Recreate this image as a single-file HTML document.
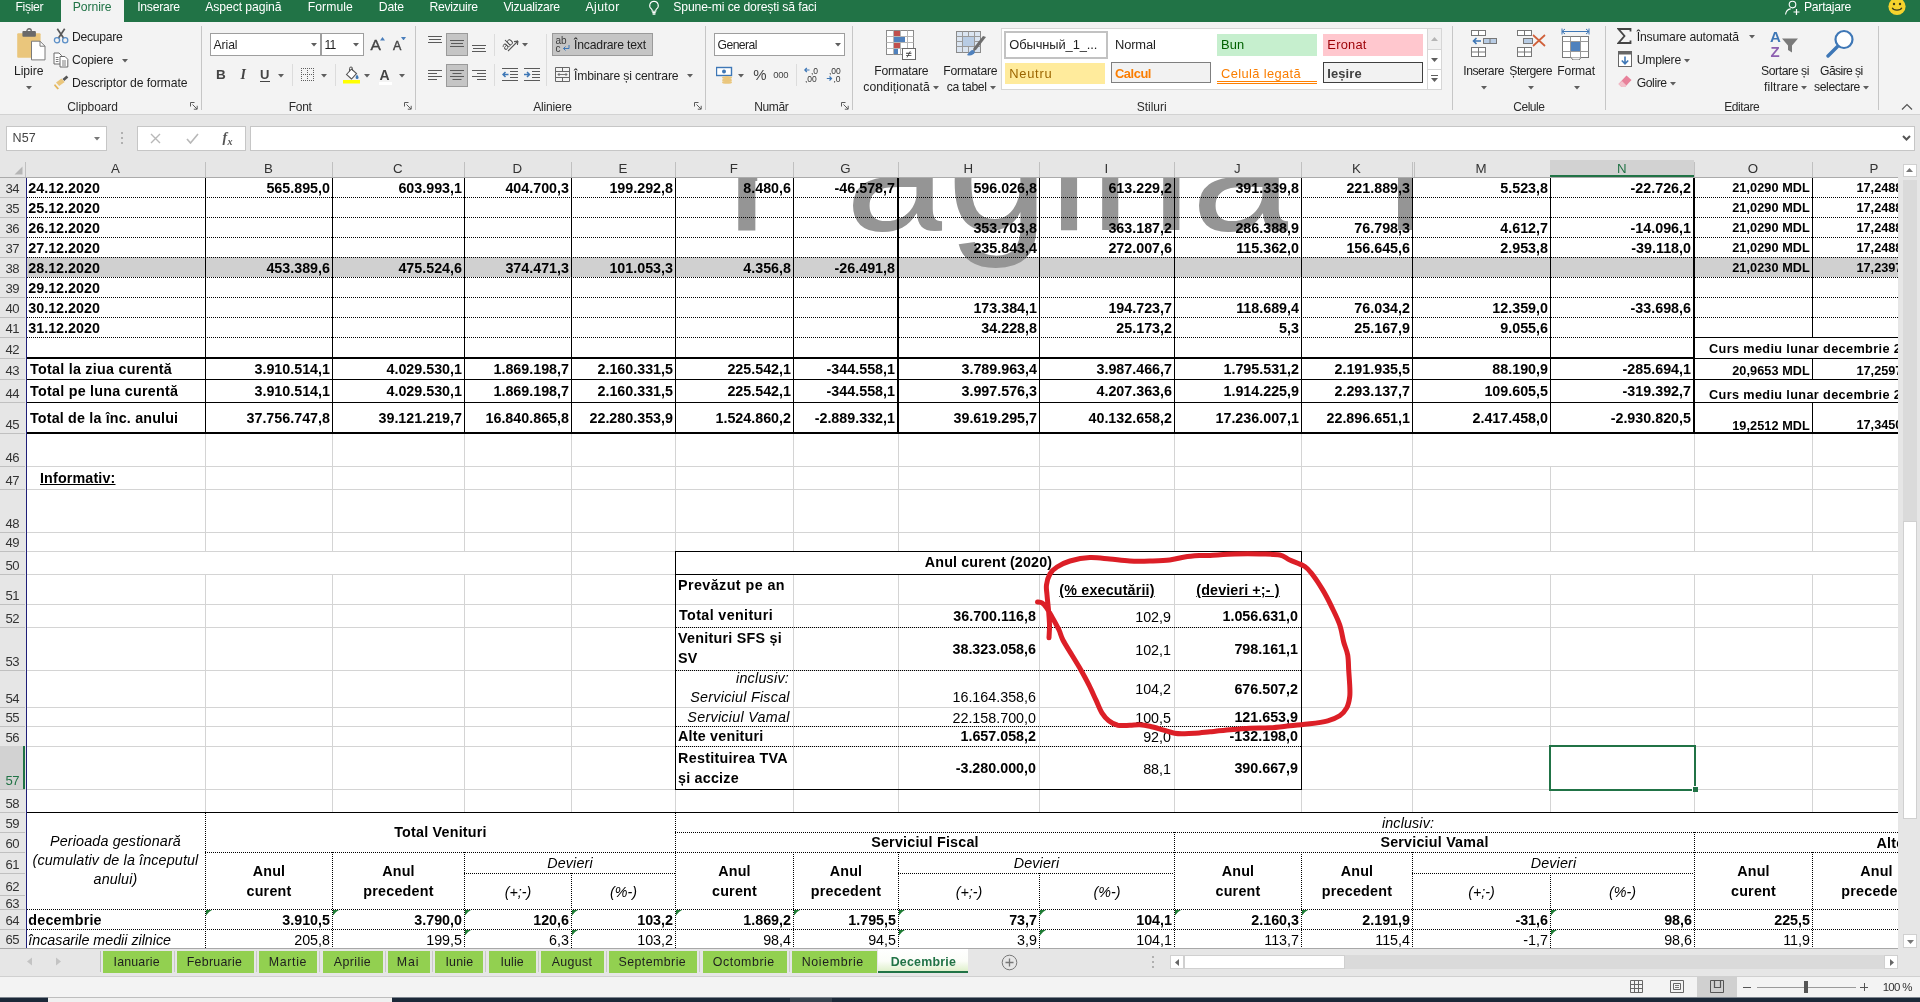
<!DOCTYPE html>
<html><head><meta charset="utf-8"><title>Excel</title>
<style>
html,body{margin:0;padding:0;}
body{width:1920px;height:1002px;overflow:hidden;position:relative;background:#e6e6e6;font-family:"Liberation Sans",sans-serif;}
div,svg{position:absolute;box-sizing:border-box;}
#root{left:0;top:0;width:1920px;height:1002px;overflow:hidden;will-change:transform;}
</style></head><body><div id="root">
<div style="left:0px;top:0px;width:1920px;height:22px;background:#217346;"></div>
<div style="left:61px;top:0px;width:63px;height:23px;background:#f3f3f3;"></div>
<div style="left:15.50px;top:-0.53px;line-height:16px;font-size:12.2px;color:#ffffff;white-space:pre;letter-spacing:-0.354px;">Fișier</div>
<div style="left:72.80px;top:-0.53px;line-height:16px;font-size:12.2px;color:#217346;white-space:pre;letter-spacing:-0.090px;">Pornire</div>
<div style="left:137.20px;top:-0.53px;line-height:16px;font-size:12.2px;color:#ffffff;white-space:pre;letter-spacing:-0.269px;">Inserare</div>
<div style="left:205.20px;top:-0.53px;line-height:16px;font-size:12.2px;color:#ffffff;white-space:pre;letter-spacing:-0.079px;">Aspect pagină</div>
<div style="left:307.80px;top:-0.53px;line-height:16px;font-size:12.2px;color:#ffffff;white-space:pre;letter-spacing:0.037px;">Formule</div>
<div style="left:378.80px;top:-0.53px;line-height:16px;font-size:12.2px;color:#ffffff;white-space:pre;letter-spacing:-0.193px;">Date</div>
<div style="left:429.50px;top:-0.53px;line-height:16px;font-size:12.2px;color:#ffffff;white-space:pre;letter-spacing:-0.283px;">Revizuire</div>
<div style="left:503.50px;top:-0.53px;line-height:16px;font-size:12.2px;color:#ffffff;white-space:pre;letter-spacing:-0.287px;">Vizualizare</div>
<div style="left:585.50px;top:-0.53px;line-height:16px;font-size:12.2px;color:#ffffff;white-space:pre;letter-spacing:0.405px;">Ajutor</div>
<div style="left:673.30px;top:-0.53px;line-height:16px;font-size:12.2px;color:#ffffff;white-space:pre;letter-spacing:-0.135px;">Spune-mi ce dorești să faci</div>
<div style="left:1804.00px;top:-0.53px;line-height:16px;font-size:12.2px;color:#ffffff;white-space:pre;letter-spacing:-0.278px;">Partajare</div>
<svg style="left:646px;top:0px;" width="16" height="16" viewBox="0 0 16 16"><path d="M8 1.2a4.3 4.3 0 0 0-2.6 7.7c.5.5.8 1 .8 1.7v.6h3.6v-.6c0-.7.3-1.2.8-1.7A4.3 4.3 0 0 0 8 1.2z" fill="none" stroke="#fff" stroke-width="1.1"/><path d="M6.3 12.6h3.4M6.6 14.1h2.8" stroke="#fff" stroke-width="1.1"/></svg>
<svg style="left:1784px;top:0px;" width="18" height="16" viewBox="0 0 18 16"><circle cx="8.5" cy="4.6" r="3.3" fill="none" stroke="#fff" stroke-width="1.1"/><path d="M1.5 14.5c.6-3.6 3-5.3 5.2-5.6" fill="none" stroke="#fff" stroke-width="1.1"/><path d="M12.5 9v6M9.5 12h6" stroke="#fff" stroke-width="1.2"/></svg>
<svg style="left:1887px;top:-3px;" width="20" height="20" viewBox="0 0 20 20"><circle cx="10" cy="9.5" r="8.6" fill="#f6d32d"/><circle cx="7" cy="7" r="1.2" fill="#3a3a1a"/><circle cx="13" cy="7" r="1.2" fill="#3a3a1a"/><path d="M5.2 10.8c1.2 3 8.4 3 9.6 0" fill="none" stroke="#3a3a1a" stroke-width="1.2"/></svg>
<div style="left:0px;top:22px;width:1920px;height:92px;background:#f3f3f3;"></div>
<div style="left:0px;top:114px;width:1920px;height:1px;background:#d2d2d2;"></div>
<div style="left:201px;top:26px;width:1px;height:84px;background:#c6c6c6;"></div>
<div style="left:415px;top:26px;width:1px;height:84px;background:#c6c6c6;"></div>
<div style="left:705px;top:26px;width:1px;height:84px;background:#c6c6c6;"></div>
<div style="left:852px;top:26px;width:1px;height:84px;background:#c6c6c6;"></div>
<div style="left:1452px;top:26px;width:1px;height:84px;background:#c6c6c6;"></div>
<div style="left:1605px;top:26px;width:1px;height:84px;background:#c6c6c6;"></div>
<div style="left:1878px;top:26px;width:1px;height:84px;background:#c6c6c6;"></div>
<svg style="left:16px;top:28px;" width="32" height="34" viewBox="0 0 32 34"><rect x="1.2" y="5.200" width="23.400" height="24.500" rx="1" fill="#eac67c"/>
<rect x="6.400" y="3" width="13.500" height="5.700" rx="1" fill="#6a6a6a"/><circle cx="13.100" cy="3" r="2.200" fill="none" stroke="#6a6a6a" stroke-width="1.400"/>
<path d="M15.500 13.200h8.500l5 5v13.700h-13.500z" fill="#fff" stroke="#7a7a7a" stroke-width="1"/><path d="M24 13.200v5h5" fill="none" stroke="#7a7a7a" stroke-width="1"/></svg>
<div style="left:14.00px;top:62.77px;line-height:16px;font-size:12.2px;color:#1f1f1f;white-space:pre;letter-spacing:-0.057px;">Lipire</div>
<svg style="left:25.5px;top:85.5px;" width="6" height="4" viewBox="0 0 6 4"><path d="M0 0h6l-3.0 3.5z" fill="#5e5e5e"/></svg>
<svg style="left:53px;top:28px;" width="16" height="16" viewBox="0 0 16 16"><path d="M4.300 .8l6.400 9.400M11.700 .8L5.300 10.200" stroke="#595959" stroke-width="1.700" fill="none"/>
<circle cx="4" cy="12.200" r="2.600" fill="none" stroke="#5b8fc7" stroke-width="1.300"/><circle cx="12.200" cy="12.200" r="2.600" fill="none" stroke="#5b8fc7" stroke-width="1.300"/></svg>
<div style="left:72.00px;top:28.77px;line-height:16px;font-size:12.2px;color:#1f1f1f;white-space:pre;letter-spacing:-0.300px;">Decupare</div>
<svg style="left:52.5px;top:51.5px;" width="17" height="16" viewBox="0 0 17 16"><path d="M1 1h5l2.500 2.500v8.500h-7.500z" fill="#fff" stroke="#6a6a6a" stroke-width="1"/><path d="M2.800 5.500h2.700M2.800 7.500h2.700M2.800 9.500h2.700" stroke="#7c7c7c" stroke-width="1"/>
<path d="M7 4.500h5l2.800 2.800v7.700h-7.800z" fill="#fff" stroke="#6a6a6a" stroke-width="1"/><path d="M9 9h4M9 11h4M9 13h4" stroke="#7c7c7c" stroke-width="1"/></svg>
<div style="left:72.00px;top:52.07px;line-height:16px;font-size:12.2px;color:#1f1f1f;white-space:pre;letter-spacing:-0.175px;">Copiere</div>
<svg style="left:122.0px;top:59.0px;" width="6" height="4" viewBox="0 0 6 4"><path d="M0 0h6l-3.0 3.5z" fill="#5e5e5e"/></svg>
<svg style="left:53px;top:74px;" width="16" height="16" viewBox="0 0 16 16"><path d="M9.5 5l4-3.5 1.8 2-4 3.5z" fill="#555"/><path d="M3 8.5l5.5-4 3.2 3.6-5.5 4z" fill="#eac67c"/><path d="M2 10l4 4.5-1.5 1L1 11.500z" fill="#e3b65a"/></svg>
<div style="left:72.00px;top:74.77px;line-height:16px;font-size:12.2px;color:#1f1f1f;white-space:pre;letter-spacing:-0.086px;">Descriptor de formate</div>
<div style="left:67.30px;top:98.84px;line-height:16px;font-size:12px;color:#2b2b2b;white-space:pre;letter-spacing:-0.096px;">Clipboard</div>
<svg style="left:190.2px;top:102.2px;" width="8" height="8" viewBox="0 0 8 8"><path d="M0.5 4.500V0.500H4.500" fill="none" stroke="#5a5a5a" stroke-width="1"/><path d="M2.500 2.500L7 7M7.200 3.800V7.200H3.800" fill="none" stroke="#5a5a5a" stroke-width="1"/></svg>
<div style="left:210px;top:33px;width:111px;height:23px;background:#fff;border:1px solid #9e9e9e;"></div>
<div style="left:213.50px;top:36.67px;line-height:16px;font-size:12.2px;color:#1f1f1f;white-space:pre;letter-spacing:-0.081px;">Arial</div>
<svg style="left:310.5px;top:43.0px;" width="6" height="4" viewBox="0 0 6 4"><path d="M0 0h6l-3.0 3.5z" fill="#5e5e5e"/></svg>
<div style="left:321px;top:33px;width:43px;height:23px;background:#fff;border:1px solid #9e9e9e;"></div>
<div style="left:324.50px;top:36.67px;line-height:16px;font-size:12.2px;color:#1f1f1f;white-space:pre;letter-spacing:-0.832px;">11</div>
<svg style="left:353.0px;top:43.0px;" width="6" height="4" viewBox="0 0 6 4"><path d="M0 0h6l-3.0 3.5z" fill="#5e5e5e"/></svg>
<div style="left:370.50px;top:34.63px;line-height:20px;font-size:15.5px;color:#444;white-space:pre;-webkit-text-stroke:0.4px #444;">A</div>
<svg style="left:379.5px;top:37px;" width="5" height="3.5" viewBox="0 0 5 3.5"><path d="M0 3.500l2.500-3.500 2.500 3.500z" fill="#4a7ebb"/></svg>
<div style="left:393.00px;top:37.67px;line-height:16px;font-size:12.5px;color:#444;white-space:pre;-webkit-text-stroke:0.4px #444;">A</div>
<svg style="left:400.5px;top:36.5px;" width="5" height="3.5" viewBox="0 0 5 3.5"><path d="M0 0h5l-2.500 3.500z" fill="#4a7ebb"/></svg>
<div style="left:216.00px;top:66.32px;line-height:18px;font-size:13.5px;color:#444;white-space:pre;font-weight:bold;">B</div>
<div style="left:240.50px;top:66.15px;line-height:18px;font-size:14px;color:#444;white-space:pre;font-weight:bold;font-style:italic;font-family:'Liberation Serif',serif;">I</div>
<div style="left:260.00px;top:65.80px;line-height:17px;font-size:13px;color:#444;white-space:pre;font-weight:bold;">U</div>
<div style="left:260px;top:80.5px;width:10px;height:1px;background:#444;"></div>
<svg style="left:278.0px;top:74.0px;" width="6" height="4" viewBox="0 0 6 4"><path d="M0 0h6l-3.0 3.5z" fill="#5e5e5e"/></svg>
<div style="left:292px;top:64px;width:1px;height:22px;background:#dcdcdc;"></div>
<svg style="left:301px;top:68px;" width="13" height="13" viewBox="0 0 13 13"><path d="M0 .5h13M0 6.500h13M0 12.500h13M.5 0v13M6.500 0v13M12.500 0v13" fill="none" stroke="#5e5e5e" stroke-width="1" stroke-dasharray="1 1" shape-rendering="crispEdges"/></svg>
<svg style="left:321.0px;top:74.0px;" width="6" height="4" viewBox="0 0 6 4"><path d="M0 0h6l-3.0 3.5z" fill="#5e5e5e"/></svg>
<div style="left:335px;top:64px;width:1px;height:22px;background:#dcdcdc;"></div>
<svg style="left:343px;top:66px;" width="18" height="18" viewBox="0 0 18 18"><path d="M3.500 8.500l5-5.500 5 4.500-5 5.500z" fill="#fff" stroke="#555" stroke-width="1.1"/><path d="M6.500 5.500V2.500a1.500 1.500 0 0 1 3 0v2" fill="none" stroke="#555" stroke-width="1"/>
<path d="M14 8.500c1 1.500 1.600 2.300 1.600 3a1.500 1.500 0 0 1-3 0c0-.7.500-1.600 1.400-3z" fill="#3e77b6"/><rect x="0" y="14" width="17" height="3.500" fill="#ffff00"/></svg>
<svg style="left:364.0px;top:74.0px;" width="6" height="4" viewBox="0 0 6 4"><path d="M0 0h6l-3.0 3.5z" fill="#5e5e5e"/></svg>
<div style="left:379.50px;top:65.65px;line-height:18px;font-size:14px;color:#444;white-space:pre;font-weight:bold;">A</div>
<div style="left:378.5px;top:81.5px;width:13px;height:3.5px;background:#fff;"></div>
<svg style="left:398.5px;top:74.0px;" width="6" height="4" viewBox="0 0 6 4"><path d="M0 0h6l-3.0 3.5z" fill="#5e5e5e"/></svg>
<div style="left:288.70px;top:98.84px;line-height:16px;font-size:12px;color:#2b2b2b;white-space:pre;letter-spacing:-0.253px;">Font</div>
<svg style="left:404.2px;top:102.2px;" width="8" height="8" viewBox="0 0 8 8"><path d="M0.5 4.500V0.500H4.500" fill="none" stroke="#5a5a5a" stroke-width="1"/><path d="M2.500 2.500L7 7M7.200 3.800V7.200H3.800" fill="none" stroke="#5a5a5a" stroke-width="1"/></svg>
<svg style="left:428px;top:36px;" width="14" height="9" viewBox="0 0 14 9"><rect x="0.0" y="0" width="14" height="1" fill="#5a5a5a"/><rect x="1.0" y="3" width="12" height="1" fill="#5a5a5a"/><rect x="0.0" y="6" width="14" height="1" fill="#5a5a5a"/></svg>
<div style="left:446px;top:33px;width:22px;height:23px;background:#c5c5c5;border:1px solid #9a9a9a;"></div>
<svg style="left:450px;top:40px;" width="14" height="9" viewBox="0 0 14 9"><rect x="0.0" y="0" width="14" height="1" fill="#5a5a5a"/><rect x="1.0" y="3" width="12" height="1" fill="#5a5a5a"/><rect x="0.0" y="6" width="14" height="1" fill="#5a5a5a"/></svg>
<svg style="left:472px;top:45px;" width="14" height="9" viewBox="0 0 14 9"><rect x="0.0" y="0" width="14" height="1" fill="#5a5a5a"/><rect x="1.0" y="3" width="12" height="1" fill="#5a5a5a"/><rect x="0.0" y="6" width="14" height="1" fill="#5a5a5a"/></svg>
<div style="left:494px;top:34px;width:1px;height:22px;background:#dcdcdc;"></div>
<svg style="left:501px;top:33px;" width="20" height="20" viewBox="0 0 20 20"><text x="0" y="13" font-size="11" font-family="Liberation Sans" fill="#444" transform="rotate(-45 8 10)">ab</text><path d="M7 18L17 8M17 8l-4 .6M17 8l-.6 4" stroke="#555" stroke-width="1.1" fill="none"/></svg>
<svg style="left:521.5px;top:42.5px;" width="6" height="4" viewBox="0 0 6 4"><path d="M0 0h6l-3.0 3.5z" fill="#5e5e5e"/></svg>
<svg style="left:428px;top:70px;" width="14" height="12" viewBox="0 0 14 12"><rect x="0" y="0" width="14" height="1" fill="#5a5a5a"/><rect x="0" y="3" width="9" height="1" fill="#5a5a5a"/><rect x="0" y="6" width="14" height="1" fill="#5a5a5a"/><rect x="0" y="9" width="9" height="1" fill="#5a5a5a"/></svg>
<div style="left:446px;top:64px;width:22px;height:23px;background:#c5c5c5;border:1px solid #9a9a9a;"></div>
<svg style="left:450px;top:70px;" width="14" height="12" viewBox="0 0 14 12"><rect x="0.0" y="0" width="14" height="1" fill="#5a5a5a"/><rect x="2.5" y="3" width="9" height="1" fill="#5a5a5a"/><rect x="0.0" y="6" width="14" height="1" fill="#5a5a5a"/><rect x="2.5" y="9" width="9" height="1" fill="#5a5a5a"/></svg>
<svg style="left:472px;top:70px;" width="14" height="12" viewBox="0 0 14 12"><rect x="0" y="0" width="14" height="1" fill="#5a5a5a"/><rect x="5" y="3" width="9" height="1" fill="#5a5a5a"/><rect x="0" y="6" width="14" height="1" fill="#5a5a5a"/><rect x="5" y="9" width="9" height="1" fill="#5a5a5a"/></svg>
<div style="left:494px;top:64px;width:1px;height:22px;background:#dcdcdc;"></div>
<svg style="left:502px;top:68px;" width="16" height="13" viewBox="0 0 16 13"><rect x="0" y="0" width="16" height="1" fill="#5a5a5a"/><rect x="8" y="3" width="8" height="1" fill="#5a5a5a"/><rect x="8" y="6" width="8" height="1" fill="#5a5a5a"/><rect x="8" y="9" width="8" height="1" fill="#5a5a5a"/><rect x="0" y="12" width="16" height="1" fill="#5a5a5a"/><path d="M6.500 6.500H1M3.500 4L1 6.500 3.500 9" stroke="#3e77b6" stroke-width="1.500" fill="none"/></svg>
<svg style="left:524px;top:68px;" width="16" height="13" viewBox="0 0 16 13"><rect x="0" y="0" width="16" height="1" fill="#5a5a5a"/><rect x="8" y="3" width="8" height="1" fill="#5a5a5a"/><rect x="8" y="6" width="8" height="1" fill="#5a5a5a"/><rect x="8" y="9" width="8" height="1" fill="#5a5a5a"/><rect x="0" y="12" width="16" height="1" fill="#5a5a5a"/><path d="M0 6.500h5.500M3 4l2.500 2.500L3 9" stroke="#3e77b6" stroke-width="1.500" fill="none"/></svg>
<div style="left:546px;top:34px;width:1px;height:52px;background:#dcdcdc;"></div>
<div style="left:552px;top:33px;width:101px;height:23px;background:#c5c5c5;border:1px solid #9a9a9a;"></div>
<div style="left:555.50px;top:33.53px;line-height:13px;font-size:10px;color:#3b3b3b;white-space:pre;">ab</div>
<div style="left:555.50px;top:41.53px;line-height:13px;font-size:10px;color:#3b3b3b;white-space:pre;">c</div>
<svg style="left:562px;top:45px;" width="8" height="7" viewBox="0 0 8 7"><path d="M7 0v3.500H1.500M3.500 1.500l-2 2 2 2" fill="none" stroke="#3e77b6" stroke-width="1"/></svg>
<div style="left:574.00px;top:37.17px;line-height:16px;font-size:12.2px;color:#1f1f1f;white-space:pre;letter-spacing:-0.185px;">Încadrare text</div>
<svg style="left:555px;top:67px;" width="15" height="15" viewBox="0 0 15 15"><path d="M.5 .5h14v14h-14zM.5 4.500h14M.5 10.500h14M7.500 .5v4M7.500 10.500v4" fill="none" stroke="#666" stroke-width="1"/><path d="M3 7.500h9M4.500 6L3 7.500 4.500 9M10.500 6L12 7.500 10.500 9" fill="none" stroke="#666" stroke-width=".9"/></svg>
<div style="left:574.00px;top:67.77px;line-height:16px;font-size:12.2px;color:#1f1f1f;white-space:pre;letter-spacing:-0.166px;">Îmbinare și centrare</div>
<svg style="left:687.0px;top:74.0px;" width="6" height="4" viewBox="0 0 6 4"><path d="M0 0h6l-3.0 3.5z" fill="#5e5e5e"/></svg>
<div style="left:533.30px;top:98.84px;line-height:16px;font-size:12px;color:#2b2b2b;white-space:pre;letter-spacing:-0.190px;">Aliniere</div>
<svg style="left:694.2px;top:102.2px;" width="8" height="8" viewBox="0 0 8 8"><path d="M0.5 4.500V0.500H4.500" fill="none" stroke="#5a5a5a" stroke-width="1"/><path d="M2.500 2.500L7 7M7.200 3.800V7.200H3.800" fill="none" stroke="#5a5a5a" stroke-width="1"/></svg>
<div style="left:714px;top:33px;width:131px;height:23px;background:#fff;border:1px solid #9e9e9e;"></div>
<div style="left:717.50px;top:36.67px;line-height:16px;font-size:12.2px;color:#1f1f1f;white-space:pre;letter-spacing:-0.558px;">General</div>
<svg style="left:834.5px;top:43.0px;" width="6" height="4" viewBox="0 0 6 4"><path d="M0 0h6l-3.0 3.5z" fill="#5e5e5e"/></svg>
<svg style="left:716px;top:66px;" width="18" height="18" viewBox="0 0 18 18"><rect x=".5" y="1.500" width="15" height="8" fill="#fff" stroke="#3e77b6" stroke-width="1.400"/><circle cx="8" cy="5.500" r="2" fill="#3e77b6"/>
<ellipse cx="11" cy="11.500" rx="5" ry="1.600" fill="#eac67c"/><ellipse cx="11" cy="14" rx="5" ry="1.600" fill="#eac67c"/><ellipse cx="11" cy="16.300" rx="5" ry="1.500" fill="#eac67c"/></svg>
<svg style="left:738.0px;top:74.0px;" width="6" height="4" viewBox="0 0 6 4"><path d="M0 0h6l-3.0 3.5z" fill="#5e5e5e"/></svg>
<div style="left:753.30px;top:65.30px;line-height:20px;font-size:15px;color:#444;white-space:pre;">%</div>
<div style="left:773.30px;top:69.21px;line-height:12px;font-size:9.5px;color:#444;white-space:pre;letter-spacing:-0.283px;">000</div>
<div style="left:796px;top:64px;width:1px;height:22px;background:#dcdcdc;"></div>
<svg style="left:804px;top:67px;" width="16" height="16" viewBox="0 0 16 16"><path d="M5.500 3H.8M2.800 1L.8 3l2 2" fill="none" stroke="#3e77b6" stroke-width="1.200"/><text x="7" y="6.500" font-size="8.500" font-family="Liberation Sans" fill="#333">,0</text><text x="1" y="14.500" font-size="8.500" font-family="Liberation Sans" fill="#333">,00</text></svg>
<svg style="left:826px;top:67px;" width="16" height="16" viewBox="0 0 16 16"><text x="3" y="6.500" font-size="8.500" font-family="Liberation Sans" fill="#333">,00</text><path d="M.8 11.500h4.700M3.500 9.500l2 2-2 2" fill="none" stroke="#3e77b6" stroke-width="1.200"/><text x="7.500" y="14.500" font-size="8.500" font-family="Liberation Sans" fill="#333">,0</text></svg>
<div style="left:754.30px;top:98.84px;line-height:16px;font-size:12px;color:#2b2b2b;white-space:pre;letter-spacing:-0.401px;">Număr</div>
<svg style="left:840.7px;top:102.2px;" width="8" height="8" viewBox="0 0 8 8"><path d="M0.5 4.500V0.500H4.500" fill="none" stroke="#5a5a5a" stroke-width="1"/><path d="M2.500 2.500L7 7M7.200 3.800V7.200H3.800" fill="none" stroke="#5a5a5a" stroke-width="1"/></svg>
<svg style="left:886px;top:30px;" width="32" height="31" viewBox="0 0 32 31"><rect x=".5" y=".5" width="27" height="24" fill="#fff" stroke="#8a8a8a"/><path d="M.5 6.500h27M.5 12.500h27M.5 18.500h27M7.500 .5v24M14.500 .5v24M21.500 .5v24" stroke="#b5b5b5" stroke-width="1" fill="none"/>
<rect x="8" y="1" width="6" height="5" fill="#c0504d"/><rect x="8" y="7" width="11" height="5" fill="#4f81bd"/><rect x="8" y="13" width="6" height="5" fill="#c0504d"/><rect x="8" y="19" width="4" height="5" fill="#4f81bd"/>
<rect x="16.500" y="18.500" width="13" height="11" fill="#fff" stroke="#6a6a6a"/><text x="19.500" y="28" font-size="11" font-family="Liberation Sans" fill="#333">≠</text></svg>
<div style="left:874.30px;top:62.77px;line-height:16px;font-size:12.2px;color:#1f1f1f;white-space:pre;letter-spacing:-0.252px;">Formatare</div>
<div style="left:863.30px;top:79.37px;line-height:16px;font-size:12.2px;color:#1f1f1f;white-space:pre;letter-spacing:0.059px;">condiționată</div>
<svg style="left:932.5px;top:86.0px;" width="6" height="4" viewBox="0 0 6 4"><path d="M0 0h6l-3.0 3.5z" fill="#5e5e5e"/></svg>
<svg style="left:956px;top:31px;" width="32" height="30" viewBox="0 0 32 30"><rect x=".5" y=".5" width="24" height="21" fill="#dbe5f1" stroke="#8a8a8a"/><path d="M.5 5.500h24M.5 10.500h24M.5 15.500h24M6.500 .5v21M12.500 .5v21M18.500 .5v21" stroke="#9a9a9a" stroke-width="1" fill="none"/>
<rect x="7" y="6" width="11" height="9" fill="#b8cce4"/><path d="M30 6L20 19l-3 1 .5-3L27 5z" fill="#6d6d6d"/><path d="M17 19c-2 0-4 2-6 5 3 1.500 7 0 8-3z" fill="#4f81bd"/></svg>
<div style="left:943.30px;top:62.77px;line-height:16px;font-size:12.2px;color:#1f1f1f;white-space:pre;letter-spacing:-0.252px;">Formatare</div>
<div style="left:946.70px;top:79.37px;line-height:16px;font-size:12.2px;color:#1f1f1f;white-space:pre;letter-spacing:-0.341px;">ca tabel</div>
<svg style="left:989.5px;top:86.0px;" width="6" height="4" viewBox="0 0 6 4"><path d="M0 0h6l-3.0 3.5z" fill="#5e5e5e"/></svg>
<div style="left:1001px;top:28px;width:441px;height:62px;background:#fff;border:1px solid #d6d6d6;"></div>
<div style="left:1003.5px;top:31px;width:104px;height:27.5px;background:#fff;border:2.5px solid #c2c2c2;"></div>
<div style="left:1009.30px;top:36.13px;line-height:17px;font-size:12.9px;color:#1f1f1f;white-space:pre;letter-spacing:-0.099px;">Обычный_1_...</div>
<div style="left:1115.00px;top:36.13px;line-height:17px;font-size:12.9px;color:#1f1f1f;white-space:pre;letter-spacing:-0.145px;">Normal</div>
<div style="left:1217px;top:34px;width:100px;height:21.5px;background:#c6efce;"></div>
<div style="left:1221.00px;top:36.13px;line-height:17px;font-size:12.9px;color:#006100;white-space:pre;letter-spacing:0.116px;">Bun</div>
<div style="left:1323px;top:34px;width:100px;height:21.5px;background:#ffc7ce;"></div>
<div style="left:1327.30px;top:36.13px;line-height:17px;font-size:12.9px;color:#9c0006;white-space:pre;letter-spacing:0.232px;">Eronat</div>
<div style="left:1005px;top:62.5px;width:100px;height:21px;background:#ffeb9c;"></div>
<div style="left:1009.30px;top:64.53px;line-height:17px;font-size:12.9px;color:#9c6500;white-space:pre;letter-spacing:0.713px;">Neutru</div>
<div style="left:1111px;top:61.8px;width:100px;height:21.7px;background:#f2f2f2;border:1px solid #7f7f7f;"></div>
<div style="left:1115.00px;top:64.53px;line-height:17px;font-size:12.9px;color:#fa7d00;white-space:pre;letter-spacing:-0.452px;font-weight:bold;">Calcul</div>
<div style="left:1221.00px;top:64.53px;line-height:17px;font-size:12.9px;color:#fa7d00;white-space:pre;letter-spacing:0.361px;">Celulă legată</div>
<div style="left:1217px;top:80.5px;width:100px;height:3px;border-top:1px solid #ff8001;border-bottom:1px solid #ff8001;"></div>
<div style="left:1323px;top:61.8px;width:100px;height:21.7px;background:#f2f2f2;border:1px solid #3f3f3f;"></div>
<div style="left:1327.30px;top:64.53px;line-height:17px;font-size:12.9px;color:#3f3f3f;white-space:pre;letter-spacing:0.115px;font-weight:bold;">Ieșire</div>
<div style="left:1427px;top:28px;width:15px;height:62px;background:#fff;border:1px solid #d6d6d6;"></div>
<div style="left:1428px;top:29px;width:13px;height:20px;background:#f0f0f0;"></div>
<div style="left:1427px;top:49px;width:15px;height:1px;background:#d6d6d6;"></div>
<div style="left:1427px;top:69px;width:15px;height:1px;background:#d6d6d6;"></div>
<svg style="left:1431px;top:37px;" width="7" height="4" viewBox="0 0 7 4"><path d="M0 4l3.500-4 3.500 4z" fill="#b5b5b5"/></svg>
<svg style="left:1431px;top:57.5px;" width="7" height="4" viewBox="0 0 7 4"><path d="M0 0h7l-3.500 4z" fill="#5e5e5e"/></svg>
<svg style="left:1431px;top:75px;" width="7" height="8" viewBox="0 0 7 8"><path d="M0 .5h7" stroke="#5e5e5e" stroke-width="1"/><path d="M0 3h7l-3.500 4z" fill="#5e5e5e"/></svg>
<div style="left:1136.70px;top:98.84px;line-height:16px;font-size:12px;color:#2b2b2b;white-space:pre;letter-spacing:-0.001px;">Stiluri</div>
<svg style="left:1470px;top:29px;" width="28" height="30" viewBox="0 0 28 30"><rect x="1.500" y="1.500" width="14" height="5" fill="#fff" stroke="#777"/><path d="M8.500 1.500v5" stroke="#777"/><rect x="1.5" y="18.5" width="14" height="9" fill="#fff" stroke="#777" stroke-width="1"/><path d="M8.5 18.5v9M1.5 23.0h14" stroke="#777" stroke-width="1"/><rect x="13.500" y="9.500" width="13" height="5" fill="#b8cce4" stroke="#777"/><path d="M20 9.500v5" stroke="#777"/><path d="M11 12H3.500M6.500 9L3.500 12l3 3" fill="none" stroke="#3e77b6" stroke-width="1.600"/></svg>
<div style="left:1463.30px;top:62.77px;line-height:16px;font-size:12.2px;color:#1f1f1f;white-space:pre;letter-spacing:-0.507px;">Inserare</div>
<svg style="left:1480.5px;top:86.0px;" width="6" height="4" viewBox="0 0 6 4"><path d="M0 0h6l-3.0 3.5z" fill="#5e5e5e"/></svg>
<svg style="left:1516px;top:29px;" width="32" height="30" viewBox="0 0 32 30"><rect x="1.500" y="1.500" width="14" height="5" fill="#fff" stroke="#777"/><path d="M8.500 1.500v5" stroke="#777"/><rect x="1.5" y="18.5" width="14" height="9" fill="#fff" stroke="#777" stroke-width="1"/><path d="M8.5 18.5v9M1.5 23.0h14" stroke="#777" stroke-width="1"/><rect x="7.500" y="9.500" width="9" height="5" fill="#b8cce4" stroke="#777"/><path d="M17 6l12 11M29 6L17 17" stroke="#d0603a" stroke-width="1.700" fill="none"/></svg>
<div style="left:1509.30px;top:62.77px;line-height:16px;font-size:12.2px;color:#1f1f1f;white-space:pre;letter-spacing:-0.512px;">Ștergere</div>
<svg style="left:1527.5px;top:86.0px;" width="6" height="4" viewBox="0 0 6 4"><path d="M0 0h6l-3.0 3.5z" fill="#5e5e5e"/></svg>
<svg style="left:1561px;top:28px;" width="30" height="32" viewBox="0 0 30 32"><path d="M1 3.500h27M1 .5v6M28 .5v6M4 1l-3 2.500 3 2.500M25 1l3 2.500-3 2.500" fill="none" stroke="#3e77b6" stroke-width="1"/><rect x="1.500" y="8.500" width="26" height="21" fill="#fff" stroke="#777"/><path d="M1.500 13.500h26M1.500 23.500h26M9.500 8.500v21M19.500 8.500v21" stroke="#999" fill="none"/><rect x="10" y="14" width="9" height="9" fill="#4f81bd"/><path d="M10 29.500l2 2.500h6l2-2.500" fill="#f3f3f3" stroke="#777"/></svg>
<div style="left:1557.30px;top:62.77px;line-height:16px;font-size:12.2px;color:#1f1f1f;white-space:pre;letter-spacing:-0.156px;">Format</div>
<svg style="left:1573.5px;top:86.0px;" width="6" height="4" viewBox="0 0 6 4"><path d="M0 0h6l-3.0 3.5z" fill="#5e5e5e"/></svg>
<div style="left:1513.30px;top:98.84px;line-height:16px;font-size:12px;color:#2b2b2b;white-space:pre;letter-spacing:-0.503px;">Celule</div>
<svg style="left:1617px;top:28px;" width="15" height="16" viewBox="0 0 15 16"><path d="M13.500 3.500V1H1.500l6 7-6 7h12v-2.500" fill="none" stroke="#444" stroke-width="1.800"/></svg>
<div style="left:1636.70px;top:28.77px;line-height:16px;font-size:12.2px;color:#1f1f1f;white-space:pre;letter-spacing:-0.165px;">Însumare automată</div>
<svg style="left:1748.5px;top:35.0px;" width="6" height="4" viewBox="0 0 6 4"><path d="M0 0h6l-3.0 3.5z" fill="#5e5e5e"/></svg>
<svg style="left:1618px;top:51px;" width="14" height="16" viewBox="0 0 14 16"><rect x=".5" y=".5" width="13" height="15" fill="#fff" stroke="#666"/><rect x=".5" y=".5" width="13" height="3" fill="#666"/><path d="M7 5.500v7M3.800 9.500L7 12.800l3.200-3.300" fill="none" stroke="#3e77b6" stroke-width="1.600"/></svg>
<div style="left:1636.70px;top:52.07px;line-height:16px;font-size:12.2px;color:#1f1f1f;white-space:pre;letter-spacing:-0.257px;">Umplere</div>
<svg style="left:1683.5px;top:59.0px;" width="6" height="4" viewBox="0 0 6 4"><path d="M0 0h6l-3.0 3.5z" fill="#5e5e5e"/></svg>
<svg style="left:1618px;top:75px;" width="14" height="13" viewBox="0 0 14 13"><path d="M8.500 .5l5 4.500-6.500 7H3.500L.5 9z" fill="#e8819a"/><path d="M.5 9l3 3h3.500l1.500-1.600L4 6z" fill="#f3c1cb"/></svg>
<div style="left:1636.70px;top:74.77px;line-height:16px;font-size:12.2px;color:#1f1f1f;white-space:pre;letter-spacing:-0.424px;">Golire</div>
<svg style="left:1669.5px;top:82.0px;" width="6" height="4" viewBox="0 0 6 4"><path d="M0 0h6l-3.0 3.5z" fill="#5e5e5e"/></svg>
<svg style="left:1770px;top:30px;" width="30" height="30" viewBox="0 0 30 30"><text x="0" y="12" font-size="15" font-weight="bold" font-family="Liberation Sans" fill="#3e77b6">A</text><text x="0.500" y="27" font-size="15" font-weight="bold" font-family="Liberation Sans" fill="#8d5fb0">Z</text><path d="M12 8.500h16l-6 7v7l-4-2.500v-4.500z" fill="#7a7a7a"/></svg>
<div style="left:1761.00px;top:62.77px;line-height:16px;font-size:12.2px;color:#1f1f1f;white-space:pre;letter-spacing:-0.421px;">Sortare și</div>
<div style="left:1764.00px;top:79.37px;line-height:16px;font-size:12.2px;color:#1f1f1f;white-space:pre;letter-spacing:0.051px;">filtrare</div>
<svg style="left:1800.5px;top:86.0px;" width="6" height="4" viewBox="0 0 6 4"><path d="M0 0h6l-3.0 3.5z" fill="#5e5e5e"/></svg>
<svg style="left:1826px;top:29px;" width="30" height="30" viewBox="0 0 30 30"><circle cx="18" cy="10.500" r="8.500" fill="#fff" stroke="#3e77b6" stroke-width="2.200"/><path d="M11.500 17.500L2 27" stroke="#3e77b6" stroke-width="3.400" stroke-linecap="round"/></svg>
<div style="left:1820.00px;top:62.77px;line-height:16px;font-size:12.2px;color:#1f1f1f;white-space:pre;letter-spacing:-0.604px;">Găsire și</div>
<div style="left:1814.00px;top:79.37px;line-height:16px;font-size:12.2px;color:#1f1f1f;white-space:pre;letter-spacing:-0.389px;">selectare</div>
<svg style="left:1862.5px;top:86.0px;" width="6" height="4" viewBox="0 0 6 4"><path d="M0 0h6l-3.0 3.5z" fill="#5e5e5e"/></svg>
<div style="left:1724.30px;top:98.84px;line-height:16px;font-size:12px;color:#2b2b2b;white-space:pre;letter-spacing:-0.432px;">Editare</div>
<svg style="left:1901px;top:103px;" width="12" height="8" viewBox="0 0 12 8"><path d="M1 6.500l5-5 5 5" fill="none" stroke="#555" stroke-width="1.200"/></svg>
<div style="left:0px;top:115px;width:1920px;height:45px;background:#e6e6e6;"></div>
<div style="left:5.5px;top:125.5px;width:101px;height:25px;background:#fff;border:1px solid #c6c6c6;"></div>
<div style="left:12.50px;top:130.17px;line-height:16px;font-size:12.5px;color:#444;white-space:pre;letter-spacing:0.190px;">N57</div>
<svg style="left:93.5px;top:136.5px;" width="6" height="4" viewBox="0 0 6 4"><path d="M0 0h6l-3.0 3.5z" fill="#777"/></svg>
<div style="left:121px;top:132px;width:2px;height:2px;background:#b0b0b0;"></div>
<div style="left:121px;top:137px;width:2px;height:2px;background:#b0b0b0;"></div>
<div style="left:121px;top:142px;width:2px;height:2px;background:#b0b0b0;"></div>
<div style="left:137px;top:125.5px;width:109px;height:25px;background:#fff;border:1px solid #c6c6c6;"></div>
<svg style="left:150px;top:133px;" width="11" height="11" viewBox="0 0 11 11"><path d="M1 1l9 9M10 1L1 10" stroke="#b8b8b8" stroke-width="1.400"/></svg>
<svg style="left:186px;top:133px;" width="13" height="11" viewBox="0 0 13 11"><path d="M1 6l3.500 4L12 1" fill="none" stroke="#b8b8b8" stroke-width="1.600"/></svg>
<div style="left:222.50px;top:129.15px;line-height:18px;font-size:14px;color:#555;white-space:pre;font-weight:bold;font-style:italic;font-family:'Liberation Serif',serif;">f</div>
<div style="left:227.50px;top:134.53px;line-height:13px;font-size:10px;color:#555;white-space:pre;font-weight:bold;font-style:italic;font-family:'Liberation Serif',serif;">x</div>
<div style="left:250px;top:125.5px;width:1664.5px;height:25px;background:#fff;border:1px solid #c6c6c6;"></div>
<svg style="left:1902px;top:135px;" width="9" height="6" viewBox="0 0 9 6"><path d="M1 1l3.500 3.500 3.500-3.500" fill="none" stroke="#555" stroke-width="2"/></svg>
<div style="left:26px;top:177px;width:1872px;height:771px;background:#fff;"></div>
<div style="left:27px;top:257px;width:1871px;height:20px;background:#d0d0d0;"></div>
<div style="left:27px;top:466px;width:1871px;height:1px;background:#d4d4d4;"></div>
<div style="left:27px;top:489px;width:1871px;height:1px;background:#d4d4d4;"></div>
<div style="left:27px;top:532px;width:1871px;height:1px;background:#d4d4d4;"></div>
<div style="left:27px;top:551px;width:1871px;height:1px;background:#d4d4d4;"></div>
<div style="left:27px;top:574px;width:1871px;height:1px;background:#d4d4d4;"></div>
<div style="left:27px;top:604px;width:1871px;height:1px;background:#d4d4d4;"></div>
<div style="left:27px;top:627px;width:1871px;height:1px;background:#d4d4d4;"></div>
<div style="left:27px;top:670px;width:1871px;height:1px;background:#d4d4d4;"></div>
<div style="left:27px;top:707px;width:1871px;height:1px;background:#d4d4d4;"></div>
<div style="left:27px;top:726px;width:1871px;height:1px;background:#d4d4d4;"></div>
<div style="left:27px;top:746px;width:1871px;height:1px;background:#d4d4d4;"></div>
<div style="left:27px;top:789px;width:1871px;height:1px;background:#d4d4d4;"></div>
<div style="left:27px;top:812px;width:1871px;height:1px;background:#d4d4d4;"></div>
<div style="left:27px;top:433px;width:1871px;height:1px;background:#d4d4d4;"></div>
<div style="left:205px;top:433px;width:1px;height:33px;background:#d4d4d4;"></div>
<div style="left:332px;top:433px;width:1px;height:33px;background:#d4d4d4;"></div>
<div style="left:464px;top:433px;width:1px;height:33px;background:#d4d4d4;"></div>
<div style="left:571px;top:433px;width:1px;height:33px;background:#d4d4d4;"></div>
<div style="left:675px;top:433px;width:1px;height:33px;background:#d4d4d4;"></div>
<div style="left:793px;top:433px;width:1px;height:33px;background:#d4d4d4;"></div>
<div style="left:898px;top:433px;width:1px;height:33px;background:#d4d4d4;"></div>
<div style="left:1039px;top:433px;width:1px;height:33px;background:#d4d4d4;"></div>
<div style="left:1174px;top:433px;width:1px;height:33px;background:#d4d4d4;"></div>
<div style="left:1301px;top:433px;width:1px;height:33px;background:#d4d4d4;"></div>
<div style="left:1412px;top:433px;width:1px;height:33px;background:#d4d4d4;"></div>
<div style="left:1694px;top:433px;width:1px;height:33px;background:#d4d4d4;"></div>
<div style="left:1812px;top:433px;width:1px;height:33px;background:#d4d4d4;"></div>
<div style="left:205px;top:466px;width:1px;height:23px;background:#d4d4d4;"></div>
<div style="left:332px;top:466px;width:1px;height:23px;background:#d4d4d4;"></div>
<div style="left:464px;top:466px;width:1px;height:23px;background:#d4d4d4;"></div>
<div style="left:571px;top:466px;width:1px;height:23px;background:#d4d4d4;"></div>
<div style="left:675px;top:466px;width:1px;height:23px;background:#d4d4d4;"></div>
<div style="left:793px;top:466px;width:1px;height:23px;background:#d4d4d4;"></div>
<div style="left:898px;top:466px;width:1px;height:23px;background:#d4d4d4;"></div>
<div style="left:1039px;top:466px;width:1px;height:23px;background:#d4d4d4;"></div>
<div style="left:1174px;top:466px;width:1px;height:23px;background:#d4d4d4;"></div>
<div style="left:1301px;top:466px;width:1px;height:23px;background:#d4d4d4;"></div>
<div style="left:1412px;top:466px;width:1px;height:23px;background:#d4d4d4;"></div>
<div style="left:1550px;top:466px;width:1px;height:23px;background:#d4d4d4;"></div>
<div style="left:1694px;top:466px;width:1px;height:23px;background:#d4d4d4;"></div>
<div style="left:1812px;top:466px;width:1px;height:23px;background:#d4d4d4;"></div>
<div style="left:205px;top:489px;width:1px;height:43px;background:#d4d4d4;"></div>
<div style="left:332px;top:489px;width:1px;height:43px;background:#d4d4d4;"></div>
<div style="left:464px;top:489px;width:1px;height:43px;background:#d4d4d4;"></div>
<div style="left:571px;top:489px;width:1px;height:43px;background:#d4d4d4;"></div>
<div style="left:675px;top:489px;width:1px;height:43px;background:#d4d4d4;"></div>
<div style="left:793px;top:489px;width:1px;height:43px;background:#d4d4d4;"></div>
<div style="left:898px;top:489px;width:1px;height:43px;background:#d4d4d4;"></div>
<div style="left:1039px;top:489px;width:1px;height:43px;background:#d4d4d4;"></div>
<div style="left:1174px;top:489px;width:1px;height:43px;background:#d4d4d4;"></div>
<div style="left:1301px;top:489px;width:1px;height:43px;background:#d4d4d4;"></div>
<div style="left:1412px;top:489px;width:1px;height:43px;background:#d4d4d4;"></div>
<div style="left:1550px;top:489px;width:1px;height:43px;background:#d4d4d4;"></div>
<div style="left:1694px;top:489px;width:1px;height:43px;background:#d4d4d4;"></div>
<div style="left:1812px;top:489px;width:1px;height:43px;background:#d4d4d4;"></div>
<div style="left:205px;top:532px;width:1px;height:19px;background:#d4d4d4;"></div>
<div style="left:332px;top:532px;width:1px;height:19px;background:#d4d4d4;"></div>
<div style="left:464px;top:532px;width:1px;height:19px;background:#d4d4d4;"></div>
<div style="left:571px;top:532px;width:1px;height:19px;background:#d4d4d4;"></div>
<div style="left:675px;top:532px;width:1px;height:19px;background:#d4d4d4;"></div>
<div style="left:793px;top:532px;width:1px;height:19px;background:#d4d4d4;"></div>
<div style="left:898px;top:532px;width:1px;height:19px;background:#d4d4d4;"></div>
<div style="left:1039px;top:532px;width:1px;height:19px;background:#d4d4d4;"></div>
<div style="left:1174px;top:532px;width:1px;height:19px;background:#d4d4d4;"></div>
<div style="left:1301px;top:532px;width:1px;height:19px;background:#d4d4d4;"></div>
<div style="left:1412px;top:532px;width:1px;height:19px;background:#d4d4d4;"></div>
<div style="left:1550px;top:532px;width:1px;height:19px;background:#d4d4d4;"></div>
<div style="left:1694px;top:532px;width:1px;height:19px;background:#d4d4d4;"></div>
<div style="left:1812px;top:532px;width:1px;height:19px;background:#d4d4d4;"></div>
<div style="left:571px;top:551px;width:1px;height:23px;background:#d4d4d4;"></div>
<div style="left:675px;top:551px;width:1px;height:23px;background:#d4d4d4;"></div>
<div style="left:1301px;top:551px;width:1px;height:23px;background:#d4d4d4;"></div>
<div style="left:1412px;top:551px;width:1px;height:23px;background:#d4d4d4;"></div>
<div style="left:205px;top:574px;width:1px;height:30px;background:#d4d4d4;"></div>
<div style="left:332px;top:574px;width:1px;height:30px;background:#d4d4d4;"></div>
<div style="left:464px;top:574px;width:1px;height:30px;background:#d4d4d4;"></div>
<div style="left:571px;top:574px;width:1px;height:30px;background:#d4d4d4;"></div>
<div style="left:675px;top:574px;width:1px;height:30px;background:#d4d4d4;"></div>
<div style="left:793px;top:574px;width:1px;height:30px;background:#d4d4d4;"></div>
<div style="left:898px;top:574px;width:1px;height:30px;background:#d4d4d4;"></div>
<div style="left:1039px;top:574px;width:1px;height:30px;background:#d4d4d4;"></div>
<div style="left:1174px;top:574px;width:1px;height:30px;background:#d4d4d4;"></div>
<div style="left:1301px;top:574px;width:1px;height:30px;background:#d4d4d4;"></div>
<div style="left:1412px;top:574px;width:1px;height:30px;background:#d4d4d4;"></div>
<div style="left:1550px;top:574px;width:1px;height:30px;background:#d4d4d4;"></div>
<div style="left:1694px;top:574px;width:1px;height:30px;background:#d4d4d4;"></div>
<div style="left:1812px;top:574px;width:1px;height:30px;background:#d4d4d4;"></div>
<div style="left:205px;top:604px;width:1px;height:23px;background:#d4d4d4;"></div>
<div style="left:332px;top:604px;width:1px;height:23px;background:#d4d4d4;"></div>
<div style="left:464px;top:604px;width:1px;height:23px;background:#d4d4d4;"></div>
<div style="left:571px;top:604px;width:1px;height:23px;background:#d4d4d4;"></div>
<div style="left:675px;top:604px;width:1px;height:23px;background:#d4d4d4;"></div>
<div style="left:793px;top:604px;width:1px;height:23px;background:#d4d4d4;"></div>
<div style="left:898px;top:604px;width:1px;height:23px;background:#d4d4d4;"></div>
<div style="left:1039px;top:604px;width:1px;height:23px;background:#d4d4d4;"></div>
<div style="left:1174px;top:604px;width:1px;height:23px;background:#d4d4d4;"></div>
<div style="left:1301px;top:604px;width:1px;height:23px;background:#d4d4d4;"></div>
<div style="left:1412px;top:604px;width:1px;height:23px;background:#d4d4d4;"></div>
<div style="left:1550px;top:604px;width:1px;height:23px;background:#d4d4d4;"></div>
<div style="left:1694px;top:604px;width:1px;height:23px;background:#d4d4d4;"></div>
<div style="left:1812px;top:604px;width:1px;height:23px;background:#d4d4d4;"></div>
<div style="left:205px;top:627px;width:1px;height:43px;background:#d4d4d4;"></div>
<div style="left:332px;top:627px;width:1px;height:43px;background:#d4d4d4;"></div>
<div style="left:464px;top:627px;width:1px;height:43px;background:#d4d4d4;"></div>
<div style="left:571px;top:627px;width:1px;height:43px;background:#d4d4d4;"></div>
<div style="left:675px;top:627px;width:1px;height:43px;background:#d4d4d4;"></div>
<div style="left:793px;top:627px;width:1px;height:43px;background:#d4d4d4;"></div>
<div style="left:898px;top:627px;width:1px;height:43px;background:#d4d4d4;"></div>
<div style="left:1039px;top:627px;width:1px;height:43px;background:#d4d4d4;"></div>
<div style="left:1174px;top:627px;width:1px;height:43px;background:#d4d4d4;"></div>
<div style="left:1301px;top:627px;width:1px;height:43px;background:#d4d4d4;"></div>
<div style="left:1412px;top:627px;width:1px;height:43px;background:#d4d4d4;"></div>
<div style="left:1550px;top:627px;width:1px;height:43px;background:#d4d4d4;"></div>
<div style="left:1694px;top:627px;width:1px;height:43px;background:#d4d4d4;"></div>
<div style="left:1812px;top:627px;width:1px;height:43px;background:#d4d4d4;"></div>
<div style="left:205px;top:670px;width:1px;height:37px;background:#d4d4d4;"></div>
<div style="left:332px;top:670px;width:1px;height:37px;background:#d4d4d4;"></div>
<div style="left:464px;top:670px;width:1px;height:37px;background:#d4d4d4;"></div>
<div style="left:571px;top:670px;width:1px;height:37px;background:#d4d4d4;"></div>
<div style="left:675px;top:670px;width:1px;height:37px;background:#d4d4d4;"></div>
<div style="left:793px;top:670px;width:1px;height:37px;background:#d4d4d4;"></div>
<div style="left:898px;top:670px;width:1px;height:37px;background:#d4d4d4;"></div>
<div style="left:1039px;top:670px;width:1px;height:37px;background:#d4d4d4;"></div>
<div style="left:1174px;top:670px;width:1px;height:37px;background:#d4d4d4;"></div>
<div style="left:1301px;top:670px;width:1px;height:37px;background:#d4d4d4;"></div>
<div style="left:1412px;top:670px;width:1px;height:37px;background:#d4d4d4;"></div>
<div style="left:1550px;top:670px;width:1px;height:37px;background:#d4d4d4;"></div>
<div style="left:1694px;top:670px;width:1px;height:37px;background:#d4d4d4;"></div>
<div style="left:1812px;top:670px;width:1px;height:37px;background:#d4d4d4;"></div>
<div style="left:205px;top:707px;width:1px;height:19px;background:#d4d4d4;"></div>
<div style="left:332px;top:707px;width:1px;height:19px;background:#d4d4d4;"></div>
<div style="left:464px;top:707px;width:1px;height:19px;background:#d4d4d4;"></div>
<div style="left:571px;top:707px;width:1px;height:19px;background:#d4d4d4;"></div>
<div style="left:675px;top:707px;width:1px;height:19px;background:#d4d4d4;"></div>
<div style="left:793px;top:707px;width:1px;height:19px;background:#d4d4d4;"></div>
<div style="left:898px;top:707px;width:1px;height:19px;background:#d4d4d4;"></div>
<div style="left:1039px;top:707px;width:1px;height:19px;background:#d4d4d4;"></div>
<div style="left:1174px;top:707px;width:1px;height:19px;background:#d4d4d4;"></div>
<div style="left:1301px;top:707px;width:1px;height:19px;background:#d4d4d4;"></div>
<div style="left:1412px;top:707px;width:1px;height:19px;background:#d4d4d4;"></div>
<div style="left:1550px;top:707px;width:1px;height:19px;background:#d4d4d4;"></div>
<div style="left:1694px;top:707px;width:1px;height:19px;background:#d4d4d4;"></div>
<div style="left:1812px;top:707px;width:1px;height:19px;background:#d4d4d4;"></div>
<div style="left:205px;top:726px;width:1px;height:20px;background:#d4d4d4;"></div>
<div style="left:332px;top:726px;width:1px;height:20px;background:#d4d4d4;"></div>
<div style="left:464px;top:726px;width:1px;height:20px;background:#d4d4d4;"></div>
<div style="left:571px;top:726px;width:1px;height:20px;background:#d4d4d4;"></div>
<div style="left:675px;top:726px;width:1px;height:20px;background:#d4d4d4;"></div>
<div style="left:793px;top:726px;width:1px;height:20px;background:#d4d4d4;"></div>
<div style="left:898px;top:726px;width:1px;height:20px;background:#d4d4d4;"></div>
<div style="left:1039px;top:726px;width:1px;height:20px;background:#d4d4d4;"></div>
<div style="left:1174px;top:726px;width:1px;height:20px;background:#d4d4d4;"></div>
<div style="left:1301px;top:726px;width:1px;height:20px;background:#d4d4d4;"></div>
<div style="left:1412px;top:726px;width:1px;height:20px;background:#d4d4d4;"></div>
<div style="left:1550px;top:726px;width:1px;height:20px;background:#d4d4d4;"></div>
<div style="left:1694px;top:726px;width:1px;height:20px;background:#d4d4d4;"></div>
<div style="left:1812px;top:726px;width:1px;height:20px;background:#d4d4d4;"></div>
<div style="left:205px;top:746px;width:1px;height:43px;background:#d4d4d4;"></div>
<div style="left:332px;top:746px;width:1px;height:43px;background:#d4d4d4;"></div>
<div style="left:464px;top:746px;width:1px;height:43px;background:#d4d4d4;"></div>
<div style="left:571px;top:746px;width:1px;height:43px;background:#d4d4d4;"></div>
<div style="left:675px;top:746px;width:1px;height:43px;background:#d4d4d4;"></div>
<div style="left:793px;top:746px;width:1px;height:43px;background:#d4d4d4;"></div>
<div style="left:898px;top:746px;width:1px;height:43px;background:#d4d4d4;"></div>
<div style="left:1039px;top:746px;width:1px;height:43px;background:#d4d4d4;"></div>
<div style="left:1174px;top:746px;width:1px;height:43px;background:#d4d4d4;"></div>
<div style="left:1301px;top:746px;width:1px;height:43px;background:#d4d4d4;"></div>
<div style="left:1412px;top:746px;width:1px;height:43px;background:#d4d4d4;"></div>
<div style="left:1550px;top:746px;width:1px;height:43px;background:#d4d4d4;"></div>
<div style="left:1694px;top:746px;width:1px;height:43px;background:#d4d4d4;"></div>
<div style="left:1812px;top:746px;width:1px;height:43px;background:#d4d4d4;"></div>
<div style="left:205px;top:789px;width:1px;height:23px;background:#d4d4d4;"></div>
<div style="left:332px;top:789px;width:1px;height:23px;background:#d4d4d4;"></div>
<div style="left:464px;top:789px;width:1px;height:23px;background:#d4d4d4;"></div>
<div style="left:571px;top:789px;width:1px;height:23px;background:#d4d4d4;"></div>
<div style="left:675px;top:789px;width:1px;height:23px;background:#d4d4d4;"></div>
<div style="left:793px;top:789px;width:1px;height:23px;background:#d4d4d4;"></div>
<div style="left:898px;top:789px;width:1px;height:23px;background:#d4d4d4;"></div>
<div style="left:1039px;top:789px;width:1px;height:23px;background:#d4d4d4;"></div>
<div style="left:1174px;top:789px;width:1px;height:23px;background:#d4d4d4;"></div>
<div style="left:1301px;top:789px;width:1px;height:23px;background:#d4d4d4;"></div>
<div style="left:1412px;top:789px;width:1px;height:23px;background:#d4d4d4;"></div>
<div style="left:1550px;top:789px;width:1px;height:23px;background:#d4d4d4;"></div>
<div style="left:1694px;top:789px;width:1px;height:23px;background:#d4d4d4;"></div>
<div style="left:1812px;top:789px;width:1px;height:23px;background:#d4d4d4;"></div>
<div style="left:26px;top:177px;width:1872px;height:120px;overflow:hidden;"><div id="wm" style="left:697.2px;top:-110.5px;font-size:183px;line-height:200px;color:#959595;white-space:pre;"><span style="display:inline-block;clip-path:inset(0 88px 0 0);">P</span><span style="display:inline-block;clip-path:inset(0 5px 0 0);transform:scaleY(0.9);transform-origin:0 163px;">a</span>gin<span style="display:inline-block;clip-path:inset(0 5px 0 0);transform:scaleY(0.9);transform-origin:0 163px;">a</span></div><div style="left:1372.4px;top:0;width:14.9px;height:52.5px;background:#959595;"></div></div>
<div style="left:27px;top:197px;width:1871px;height:1px;background:repeating-linear-gradient(90deg,#000 0 1px,transparent 1px 2px);"></div>
<div style="left:27px;top:217px;width:1871px;height:1px;background:repeating-linear-gradient(90deg,#000 0 1px,transparent 1px 2px);"></div>
<div style="left:27px;top:237px;width:1871px;height:1px;background:repeating-linear-gradient(90deg,#000 0 1px,transparent 1px 2px);"></div>
<div style="left:27px;top:257px;width:1871px;height:1px;background:repeating-linear-gradient(90deg,#000 0 1px,transparent 1px 2px);"></div>
<div style="left:27px;top:277px;width:1871px;height:1px;background:repeating-linear-gradient(90deg,#000 0 1px,transparent 1px 2px);"></div>
<div style="left:27px;top:297px;width:1871px;height:1px;background:repeating-linear-gradient(90deg,#000 0 1px,transparent 1px 2px);"></div>
<div style="left:27px;top:317px;width:1871px;height:1px;background:repeating-linear-gradient(90deg,#000 0 1px,transparent 1px 2px);"></div>
<div style="left:27px;top:337px;width:1871px;height:1px;background:repeating-linear-gradient(90deg,#000 0 1px,transparent 1px 2px);"></div>
<div style="left:1694px;top:337px;width:204px;height:1px;background:#000;"></div>
<div style="left:205px;top:177px;width:1px;height:256px;background:#000;"></div>
<div style="left:332px;top:177px;width:1px;height:256px;background:#000;"></div>
<div style="left:464px;top:177px;width:1px;height:256px;background:#000;"></div>
<div style="left:571px;top:177px;width:1px;height:256px;background:#000;"></div>
<div style="left:675px;top:177px;width:1px;height:256px;background:#000;"></div>
<div style="left:793px;top:177px;width:1px;height:256px;background:#000;"></div>
<div style="left:1039px;top:177px;width:1px;height:256px;background:#000;"></div>
<div style="left:1174px;top:177px;width:1px;height:256px;background:#000;"></div>
<div style="left:1301px;top:177px;width:1px;height:256px;background:#000;"></div>
<div style="left:1412px;top:177px;width:1px;height:256px;background:#000;"></div>
<div style="left:1550px;top:177px;width:1px;height:256px;background:#000;"></div>
<div style="left:897px;top:177px;width:2px;height:256px;background:#000;"></div>
<div style="left:1693px;top:177px;width:2px;height:256px;background:#000;"></div>
<div style="left:1812px;top:177px;width:1px;height:160px;background:#000;"></div>
<div style="left:1812px;top:358px;width:1px;height:21px;background:#000;"></div>
<div style="left:1812px;top:402px;width:1px;height:31px;background:#000;"></div>
<div style="left:27px;top:357px;width:1667px;height:2px;background:#000;"></div>
<div style="left:1694px;top:358px;width:204px;height:1px;background:#000;"></div>
<div style="left:27px;top:379px;width:1871px;height:1px;background:#000;"></div>
<div style="left:27px;top:402px;width:1871px;height:1px;background:#000;"></div>
<div style="left:27px;top:432px;width:1871px;height:2px;background:#000;"></div>
<div style="left:28.30px;top:178.96px;line-height:19px;font-size:14.3px;color:#000;white-space:pre;font-weight:bold;">24.12.2020</div>
<div style="left:266.38px;top:178.96px;line-height:19px;font-size:14.3px;color:#000;white-space:pre;font-weight:bold;">565.895,0</div>
<div style="left:398.38px;top:178.96px;line-height:19px;font-size:14.3px;color:#000;white-space:pre;font-weight:bold;">603.993,1</div>
<div style="left:505.38px;top:178.96px;line-height:19px;font-size:14.3px;color:#000;white-space:pre;font-weight:bold;">404.700,3</div>
<div style="left:609.38px;top:178.96px;line-height:19px;font-size:14.3px;color:#000;white-space:pre;font-weight:bold;">199.292,8</div>
<div style="left:743.29px;top:178.96px;line-height:19px;font-size:14.3px;color:#000;white-space:pre;font-weight:bold;">8.480,6</div>
<div style="left:834.57px;top:178.96px;line-height:19px;font-size:14.3px;color:#000;white-space:pre;font-weight:bold;">-46.578,7</div>
<div style="left:973.38px;top:178.96px;line-height:19px;font-size:14.3px;color:#000;white-space:pre;font-weight:bold;">596.026,8</div>
<div style="left:1108.38px;top:178.96px;line-height:19px;font-size:14.3px;color:#000;white-space:pre;font-weight:bold;">613.229,2</div>
<div style="left:1235.38px;top:178.96px;line-height:19px;font-size:14.3px;color:#000;white-space:pre;font-weight:bold;">391.339,8</div>
<div style="left:1346.38px;top:178.96px;line-height:19px;font-size:14.3px;color:#000;white-space:pre;font-weight:bold;">221.889,3</div>
<div style="left:1500.29px;top:178.96px;line-height:19px;font-size:14.3px;color:#000;white-space:pre;font-weight:bold;">5.523,8</div>
<div style="left:1630.57px;top:178.96px;line-height:19px;font-size:14.3px;color:#000;white-space:pre;font-weight:bold;">-22.726,2</div>
<div style="left:28.30px;top:198.96px;line-height:19px;font-size:14.3px;color:#000;white-space:pre;font-weight:bold;">25.12.2020</div>
<div style="left:28.30px;top:218.96px;line-height:19px;font-size:14.3px;color:#000;white-space:pre;font-weight:bold;">26.12.2020</div>
<div style="left:973.38px;top:218.96px;line-height:19px;font-size:14.3px;color:#000;white-space:pre;font-weight:bold;">353.703,8</div>
<div style="left:1108.38px;top:218.96px;line-height:19px;font-size:14.3px;color:#000;white-space:pre;font-weight:bold;">363.187,2</div>
<div style="left:1235.38px;top:218.96px;line-height:19px;font-size:14.3px;color:#000;white-space:pre;font-weight:bold;">286.388,9</div>
<div style="left:1354.34px;top:218.96px;line-height:19px;font-size:14.3px;color:#000;white-space:pre;font-weight:bold;">76.798,3</div>
<div style="left:1500.29px;top:218.96px;line-height:19px;font-size:14.3px;color:#000;white-space:pre;font-weight:bold;">4.612,7</div>
<div style="left:1630.57px;top:218.96px;line-height:19px;font-size:14.3px;color:#000;white-space:pre;font-weight:bold;">-14.096,1</div>
<div style="left:28.30px;top:238.96px;line-height:19px;font-size:14.3px;color:#000;white-space:pre;font-weight:bold;">27.12.2020</div>
<div style="left:973.38px;top:238.96px;line-height:19px;font-size:14.3px;color:#000;white-space:pre;font-weight:bold;">235.843,4</div>
<div style="left:1108.38px;top:238.96px;line-height:19px;font-size:14.3px;color:#000;white-space:pre;font-weight:bold;">272.007,6</div>
<div style="left:1236.17px;top:238.96px;line-height:19px;font-size:14.3px;color:#000;white-space:pre;font-weight:bold;">115.362,0</div>
<div style="left:1346.38px;top:238.96px;line-height:19px;font-size:14.3px;color:#000;white-space:pre;font-weight:bold;">156.645,6</div>
<div style="left:1500.29px;top:238.96px;line-height:19px;font-size:14.3px;color:#000;white-space:pre;font-weight:bold;">2.953,8</div>
<div style="left:1631.36px;top:238.96px;line-height:19px;font-size:14.3px;color:#000;white-space:pre;font-weight:bold;">-39.118,0</div>
<div style="left:28.30px;top:258.96px;line-height:19px;font-size:14.3px;color:#000;white-space:pre;font-weight:bold;">28.12.2020</div>
<div style="left:266.38px;top:258.96px;line-height:19px;font-size:14.3px;color:#000;white-space:pre;font-weight:bold;">453.389,6</div>
<div style="left:398.38px;top:258.96px;line-height:19px;font-size:14.3px;color:#000;white-space:pre;font-weight:bold;">475.524,6</div>
<div style="left:505.38px;top:258.96px;line-height:19px;font-size:14.3px;color:#000;white-space:pre;font-weight:bold;">374.471,3</div>
<div style="left:609.38px;top:258.96px;line-height:19px;font-size:14.3px;color:#000;white-space:pre;font-weight:bold;">101.053,3</div>
<div style="left:743.29px;top:258.96px;line-height:19px;font-size:14.3px;color:#000;white-space:pre;font-weight:bold;">4.356,8</div>
<div style="left:834.57px;top:258.96px;line-height:19px;font-size:14.3px;color:#000;white-space:pre;font-weight:bold;">-26.491,8</div>
<div style="left:28.30px;top:278.96px;line-height:19px;font-size:14.3px;color:#000;white-space:pre;font-weight:bold;">29.12.2020</div>
<div style="left:28.30px;top:298.96px;line-height:19px;font-size:14.3px;color:#000;white-space:pre;font-weight:bold;">30.12.2020</div>
<div style="left:973.38px;top:298.96px;line-height:19px;font-size:14.3px;color:#000;white-space:pre;font-weight:bold;">173.384,1</div>
<div style="left:1108.38px;top:298.96px;line-height:19px;font-size:14.3px;color:#000;white-space:pre;font-weight:bold;">194.723,7</div>
<div style="left:1236.17px;top:298.96px;line-height:19px;font-size:14.3px;color:#000;white-space:pre;font-weight:bold;">118.689,4</div>
<div style="left:1354.34px;top:298.96px;line-height:19px;font-size:14.3px;color:#000;white-space:pre;font-weight:bold;">76.034,2</div>
<div style="left:1492.34px;top:298.96px;line-height:19px;font-size:14.3px;color:#000;white-space:pre;font-weight:bold;">12.359,0</div>
<div style="left:1630.57px;top:298.96px;line-height:19px;font-size:14.3px;color:#000;white-space:pre;font-weight:bold;">-33.698,6</div>
<div style="left:28.30px;top:318.96px;line-height:19px;font-size:14.3px;color:#000;white-space:pre;font-weight:bold;">31.12.2020</div>
<div style="left:981.34px;top:318.96px;line-height:19px;font-size:14.3px;color:#000;white-space:pre;font-weight:bold;">34.228,8</div>
<div style="left:1116.34px;top:318.96px;line-height:19px;font-size:14.3px;color:#000;white-space:pre;font-weight:bold;">25.173,2</div>
<div style="left:1279.12px;top:318.96px;line-height:19px;font-size:14.3px;color:#000;white-space:pre;font-weight:bold;">5,3</div>
<div style="left:1354.34px;top:318.96px;line-height:19px;font-size:14.3px;color:#000;white-space:pre;font-weight:bold;">25.167,9</div>
<div style="left:1500.29px;top:318.96px;line-height:19px;font-size:14.3px;color:#000;white-space:pre;font-weight:bold;">9.055,6</div>
<div style="left:30.00px;top:359.76px;line-height:19px;font-size:14.3px;color:#000;white-space:pre;letter-spacing:0.266px;font-weight:bold;">Total la ziua curentă</div>
<div style="left:254.46px;top:359.76px;line-height:19px;font-size:14.3px;color:#000;white-space:pre;font-weight:bold;">3.910.514,1</div>
<div style="left:386.46px;top:359.76px;line-height:19px;font-size:14.3px;color:#000;white-space:pre;font-weight:bold;">4.029.530,1</div>
<div style="left:493.46px;top:359.76px;line-height:19px;font-size:14.3px;color:#000;white-space:pre;font-weight:bold;">1.869.198,7</div>
<div style="left:597.46px;top:359.76px;line-height:19px;font-size:14.3px;color:#000;white-space:pre;font-weight:bold;">2.160.331,5</div>
<div style="left:727.38px;top:359.76px;line-height:19px;font-size:14.3px;color:#000;white-space:pre;font-weight:bold;">225.542,1</div>
<div style="left:826.62px;top:359.76px;line-height:19px;font-size:14.3px;color:#000;white-space:pre;font-weight:bold;">-344.558,1</div>
<div style="left:961.46px;top:359.76px;line-height:19px;font-size:14.3px;color:#000;white-space:pre;font-weight:bold;">3.789.963,4</div>
<div style="left:1096.46px;top:359.76px;line-height:19px;font-size:14.3px;color:#000;white-space:pre;font-weight:bold;">3.987.466,7</div>
<div style="left:1223.46px;top:359.76px;line-height:19px;font-size:14.3px;color:#000;white-space:pre;font-weight:bold;">1.795.531,2</div>
<div style="left:1334.46px;top:359.76px;line-height:19px;font-size:14.3px;color:#000;white-space:pre;font-weight:bold;">2.191.935,5</div>
<div style="left:1492.34px;top:359.76px;line-height:19px;font-size:14.3px;color:#000;white-space:pre;font-weight:bold;">88.190,9</div>
<div style="left:1622.62px;top:359.76px;line-height:19px;font-size:14.3px;color:#000;white-space:pre;font-weight:bold;">-285.694,1</div>
<div style="left:30.00px;top:381.76px;line-height:19px;font-size:14.3px;color:#000;white-space:pre;letter-spacing:0.264px;font-weight:bold;">Total pe luna curentă</div>
<div style="left:254.46px;top:381.76px;line-height:19px;font-size:14.3px;color:#000;white-space:pre;font-weight:bold;">3.910.514,1</div>
<div style="left:386.46px;top:381.76px;line-height:19px;font-size:14.3px;color:#000;white-space:pre;font-weight:bold;">4.029.530,1</div>
<div style="left:493.46px;top:381.76px;line-height:19px;font-size:14.3px;color:#000;white-space:pre;font-weight:bold;">1.869.198,7</div>
<div style="left:597.46px;top:381.76px;line-height:19px;font-size:14.3px;color:#000;white-space:pre;font-weight:bold;">2.160.331,5</div>
<div style="left:727.38px;top:381.76px;line-height:19px;font-size:14.3px;color:#000;white-space:pre;font-weight:bold;">225.542,1</div>
<div style="left:826.62px;top:381.76px;line-height:19px;font-size:14.3px;color:#000;white-space:pre;font-weight:bold;">-344.558,1</div>
<div style="left:961.46px;top:381.76px;line-height:19px;font-size:14.3px;color:#000;white-space:pre;font-weight:bold;">3.997.576,3</div>
<div style="left:1096.46px;top:381.76px;line-height:19px;font-size:14.3px;color:#000;white-space:pre;font-weight:bold;">4.207.363,6</div>
<div style="left:1223.46px;top:381.76px;line-height:19px;font-size:14.3px;color:#000;white-space:pre;font-weight:bold;">1.914.225,9</div>
<div style="left:1334.46px;top:381.76px;line-height:19px;font-size:14.3px;color:#000;white-space:pre;font-weight:bold;">2.293.137,7</div>
<div style="left:1484.38px;top:381.76px;line-height:19px;font-size:14.3px;color:#000;white-space:pre;font-weight:bold;">109.605,5</div>
<div style="left:1622.62px;top:381.76px;line-height:19px;font-size:14.3px;color:#000;white-space:pre;font-weight:bold;">-319.392,7</div>
<div style="left:30.00px;top:408.76px;line-height:19px;font-size:14.3px;color:#000;white-space:pre;letter-spacing:0.172px;font-weight:bold;">Total de la înc. anului</div>
<div style="left:246.50px;top:408.76px;line-height:19px;font-size:14.3px;color:#000;white-space:pre;font-weight:bold;">37.756.747,8</div>
<div style="left:378.50px;top:408.76px;line-height:19px;font-size:14.3px;color:#000;white-space:pre;font-weight:bold;">39.121.219,7</div>
<div style="left:485.50px;top:408.76px;line-height:19px;font-size:14.3px;color:#000;white-space:pre;font-weight:bold;">16.840.865,8</div>
<div style="left:589.50px;top:408.76px;line-height:19px;font-size:14.3px;color:#000;white-space:pre;font-weight:bold;">22.280.353,9</div>
<div style="left:715.46px;top:408.76px;line-height:19px;font-size:14.3px;color:#000;white-space:pre;font-weight:bold;">1.524.860,2</div>
<div style="left:814.69px;top:408.76px;line-height:19px;font-size:14.3px;color:#000;white-space:pre;font-weight:bold;">-2.889.332,1</div>
<div style="left:953.50px;top:408.76px;line-height:19px;font-size:14.3px;color:#000;white-space:pre;font-weight:bold;">39.619.295,7</div>
<div style="left:1088.50px;top:408.76px;line-height:19px;font-size:14.3px;color:#000;white-space:pre;font-weight:bold;">40.132.658,2</div>
<div style="left:1215.50px;top:408.76px;line-height:19px;font-size:14.3px;color:#000;white-space:pre;font-weight:bold;">17.236.007,1</div>
<div style="left:1326.50px;top:408.76px;line-height:19px;font-size:14.3px;color:#000;white-space:pre;font-weight:bold;">22.896.651,1</div>
<div style="left:1472.46px;top:408.76px;line-height:19px;font-size:14.3px;color:#000;white-space:pre;font-weight:bold;">2.417.458,0</div>
<div style="left:1610.69px;top:408.76px;line-height:19px;font-size:14.3px;color:#000;white-space:pre;font-weight:bold;">-2.930.820,5</div>
<div style="left:1732.18px;top:179.75px;line-height:17px;font-size:12.7px;color:#000;white-space:pre;letter-spacing:0.080px;font-weight:bold;">21,0290 MDL</div>
<div style="left:1856.50px;top:179.65px;line-height:17px;font-size:12.7px;color:#000;white-space:pre;font-weight:bold;">17,2488</div>
<div style="left:1732.18px;top:199.75px;line-height:17px;font-size:12.7px;color:#000;white-space:pre;letter-spacing:0.080px;font-weight:bold;">21,0290 MDL</div>
<div style="left:1856.50px;top:199.65px;line-height:17px;font-size:12.7px;color:#000;white-space:pre;font-weight:bold;">17,2488</div>
<div style="left:1732.18px;top:219.75px;line-height:17px;font-size:12.7px;color:#000;white-space:pre;letter-spacing:0.080px;font-weight:bold;">21,0290 MDL</div>
<div style="left:1856.50px;top:219.65px;line-height:17px;font-size:12.7px;color:#000;white-space:pre;font-weight:bold;">17,2488</div>
<div style="left:1732.18px;top:239.75px;line-height:17px;font-size:12.7px;color:#000;white-space:pre;letter-spacing:0.080px;font-weight:bold;">21,0290 MDL</div>
<div style="left:1856.50px;top:239.65px;line-height:17px;font-size:12.7px;color:#000;white-space:pre;font-weight:bold;">17,2488</div>
<div style="left:1732.18px;top:259.75px;line-height:17px;font-size:12.7px;color:#000;white-space:pre;letter-spacing:0.080px;font-weight:bold;">21,0230 MDL</div>
<div style="left:1856.50px;top:259.65px;line-height:17px;font-size:12.7px;color:#000;white-space:pre;font-weight:bold;">17,2397</div>
<div style="left:1732.18px;top:363.25px;line-height:17px;font-size:12.7px;color:#000;white-space:pre;letter-spacing:0.080px;font-weight:bold;">20,9653 MDL</div>
<div style="left:1856.50px;top:362.65px;line-height:17px;font-size:12.7px;color:#000;white-space:pre;font-weight:bold;">17,2597</div>
<div style="left:1732.18px;top:417.95px;line-height:17px;font-size:12.7px;color:#000;white-space:pre;letter-spacing:0.080px;font-weight:bold;">19,2512 MDL</div>
<div style="left:1856.50px;top:417.25px;line-height:17px;font-size:12.7px;color:#000;white-space:pre;font-weight:bold;">17,3450</div>
<div style="left:1709.00px;top:340.65px;line-height:17px;font-size:12.7px;color:#000;white-space:pre;letter-spacing:0.365px;font-weight:bold;">Curs mediu lunar decembrie 2020</div>
<div style="left:1709.00px;top:386.95px;line-height:17px;font-size:12.7px;color:#000;white-space:pre;letter-spacing:0.365px;font-weight:bold;">Curs mediu lunar decembrie 2020</div>
<div style="left:40.00px;top:468.85px;line-height:19px;font-size:14.3px;color:#000;white-space:pre;letter-spacing:0.147px;font-weight:bold;text-decoration:underline;">Informativ:</div>
<div style="left:675px;top:551px;width:627px;height:1px;background:#000;"></div>
<div style="left:675px;top:574px;width:627px;height:1px;background:#000;"></div>
<div style="left:675px;top:789px;width:627px;height:1px;background:#000;"></div>
<div style="left:675px;top:551px;width:1px;height:238px;background:#000;"></div>
<div style="left:1301px;top:551px;width:1px;height:239px;background:#000;"></div>
<div style="left:676px;top:627px;width:625px;height:1px;background:repeating-linear-gradient(90deg,#000 0 1px,transparent 1px 2px);"></div>
<div style="left:676px;top:670px;width:625px;height:1px;background:repeating-linear-gradient(90deg,#000 0 1px,transparent 1px 2px);"></div>
<div style="left:676px;top:726px;width:625px;height:1px;background:repeating-linear-gradient(90deg,#000 0 1px,transparent 1px 2px);"></div>
<div style="left:676px;top:746px;width:625px;height:1px;background:repeating-linear-gradient(90deg,#000 0 1px,transparent 1px 2px);"></div>
<div style="left:924.80px;top:553.06px;line-height:19px;font-size:14.3px;color:#000;white-space:pre;letter-spacing:0.147px;font-weight:bold;">Anul curent (2020)</div>
<div style="left:678.00px;top:575.85px;line-height:19px;font-size:14.3px;color:#000;white-space:pre;letter-spacing:0.433px;font-weight:bold;">Prevăzut pe an</div>
<div style="left:1059.30px;top:581.26px;line-height:19px;font-size:14.3px;color:#000;white-space:pre;letter-spacing:0.173px;font-weight:bold;text-decoration:underline;">(% executării)</div>
<div style="left:1196.28px;top:581.26px;line-height:19px;font-size:14.3px;color:#000;white-space:pre;letter-spacing:0.141px;font-weight:bold;text-decoration:underline;">(devieri +;- )</div>
<div style="left:679.00px;top:605.76px;line-height:19px;font-size:14.3px;color:#000;white-space:pre;letter-spacing:0.377px;font-weight:bold;">Total venituri</div>
<div style="left:953.29px;top:606.76px;line-height:19px;font-size:14.3px;color:#000;white-space:pre;font-weight:bold;">36.700.116,8</div>
<div style="left:1135.21px;top:607.76px;line-height:19px;font-size:14.3px;color:#000;white-space:pre;">102,9</div>
<div style="left:1222.46px;top:606.76px;line-height:19px;font-size:14.3px;color:#000;white-space:pre;font-weight:bold;">1.056.631,0</div>
<div style="left:678.00px;top:628.55px;line-height:19px;font-size:14.3px;color:#000;white-space:pre;letter-spacing:0.258px;font-weight:bold;">Venituri SFS și</div>
<div style="left:678.00px;top:648.55px;line-height:19px;font-size:14.3px;color:#000;white-space:pre;letter-spacing:0.220px;font-weight:bold;">SV</div>
<div style="left:952.50px;top:639.76px;line-height:19px;font-size:14.3px;color:#000;white-space:pre;font-weight:bold;">38.323.058,6</div>
<div style="left:1135.21px;top:640.76px;line-height:19px;font-size:14.3px;color:#000;white-space:pre;">102,1</div>
<div style="left:1234.38px;top:639.76px;line-height:19px;font-size:14.3px;color:#000;white-space:pre;font-weight:bold;">798.161,1</div>
<div style="left:736.00px;top:668.85px;line-height:19px;font-size:14.3px;color:#000;white-space:pre;letter-spacing:0.238px;font-style:italic;">inclusiv:</div>
<div style="left:690.30px;top:687.85px;line-height:19px;font-size:14.3px;color:#000;white-space:pre;letter-spacing:0.259px;font-style:italic;">Serviciul Fiscal</div>
<div style="left:952.50px;top:687.76px;line-height:19px;font-size:14.3px;color:#000;white-space:pre;">16.164.358,6</div>
<div style="left:1135.21px;top:680.26px;line-height:19px;font-size:14.3px;color:#000;white-space:pre;">104,2</div>
<div style="left:1234.38px;top:679.76px;line-height:19px;font-size:14.3px;color:#000;white-space:pre;font-weight:bold;">676.507,2</div>
<div style="left:687.30px;top:708.26px;line-height:19px;font-size:14.3px;color:#000;white-space:pre;letter-spacing:0.299px;font-style:italic;">Serviciul Vamal</div>
<div style="left:952.50px;top:708.76px;line-height:19px;font-size:14.3px;color:#000;white-space:pre;">22.158.700,0</div>
<div style="left:1135.21px;top:708.76px;line-height:19px;font-size:14.3px;color:#000;white-space:pre;">100,5</div>
<div style="left:1234.38px;top:708.26px;line-height:19px;font-size:14.3px;color:#000;white-space:pre;font-weight:bold;">121.653,9</div>
<div style="left:678.00px;top:727.26px;line-height:19px;font-size:14.3px;color:#000;white-space:pre;letter-spacing:0.220px;font-weight:bold;">Alte venituri</div>
<div style="left:960.46px;top:727.26px;line-height:19px;font-size:14.3px;color:#000;white-space:pre;font-weight:bold;">1.657.058,2</div>
<div style="left:1143.17px;top:728.26px;line-height:19px;font-size:14.3px;color:#000;white-space:pre;">92,0</div>
<div style="left:1229.62px;top:727.26px;line-height:19px;font-size:14.3px;color:#000;white-space:pre;font-weight:bold;">-132.198,0</div>
<div style="left:678.00px;top:748.55px;line-height:19px;font-size:14.3px;color:#000;white-space:pre;letter-spacing:0.305px;font-weight:bold;">Restituirea TVA</div>
<div style="left:678.00px;top:768.55px;line-height:19px;font-size:14.3px;color:#000;white-space:pre;letter-spacing:0.220px;font-weight:bold;">și accize</div>
<div style="left:955.69px;top:758.76px;line-height:19px;font-size:14.3px;color:#000;white-space:pre;font-weight:bold;">-3.280.000,0</div>
<div style="left:1143.17px;top:759.76px;line-height:19px;font-size:14.3px;color:#000;white-space:pre;">88,1</div>
<div style="left:1234.38px;top:758.76px;line-height:19px;font-size:14.3px;color:#000;white-space:pre;font-weight:bold;">390.667,9</div>
<div style="left:27px;top:812px;width:1871px;height:1px;background:#000;"></div>
<div style="left:205px;top:813px;width:1px;height:135px;background:repeating-linear-gradient(180deg,#000 0 1px,transparent 1px 2px);"></div>
<div style="left:205px;top:852px;width:1693px;height:1px;background:repeating-linear-gradient(90deg,#000 0 1px,transparent 1px 2px);"></div>
<div style="left:675px;top:832px;width:1223px;height:1px;background:repeating-linear-gradient(90deg,#000 0 1px,transparent 1px 2px);"></div>
<div style="left:675px;top:813px;width:1px;height:135px;background:repeating-linear-gradient(180deg,#000 0 1px,transparent 1px 2px);"></div>
<div style="left:1174px;top:832px;width:1px;height:116px;background:repeating-linear-gradient(180deg,#000 0 1px,transparent 1px 2px);"></div>
<div style="left:1694px;top:832px;width:1px;height:116px;background:repeating-linear-gradient(180deg,#000 0 1px,transparent 1px 2px);"></div>
<div style="left:332px;top:852px;width:1px;height:96px;background:repeating-linear-gradient(180deg,#000 0 1px,transparent 1px 2px);"></div>
<div style="left:464px;top:852px;width:1px;height:96px;background:repeating-linear-gradient(180deg,#000 0 1px,transparent 1px 2px);"></div>
<div style="left:793px;top:852px;width:1px;height:96px;background:repeating-linear-gradient(180deg,#000 0 1px,transparent 1px 2px);"></div>
<div style="left:898px;top:852px;width:1px;height:96px;background:repeating-linear-gradient(180deg,#000 0 1px,transparent 1px 2px);"></div>
<div style="left:1301px;top:852px;width:1px;height:96px;background:repeating-linear-gradient(180deg,#000 0 1px,transparent 1px 2px);"></div>
<div style="left:1412px;top:852px;width:1px;height:96px;background:repeating-linear-gradient(180deg,#000 0 1px,transparent 1px 2px);"></div>
<div style="left:1812px;top:852px;width:1px;height:96px;background:repeating-linear-gradient(180deg,#000 0 1px,transparent 1px 2px);"></div>
<div style="left:571px;top:873px;width:1px;height:75px;background:repeating-linear-gradient(180deg,#000 0 1px,transparent 1px 2px);"></div>
<div style="left:1039px;top:873px;width:1px;height:75px;background:repeating-linear-gradient(180deg,#000 0 1px,transparent 1px 2px);"></div>
<div style="left:1550px;top:873px;width:1px;height:75px;background:repeating-linear-gradient(180deg,#000 0 1px,transparent 1px 2px);"></div>
<div style="left:464px;top:873px;width:211px;height:1px;background:repeating-linear-gradient(90deg,#000 0 1px,transparent 1px 2px);"></div>
<div style="left:898px;top:873px;width:276px;height:1px;background:repeating-linear-gradient(90deg,#000 0 1px,transparent 1px 2px);"></div>
<div style="left:1412px;top:873px;width:282px;height:1px;background:repeating-linear-gradient(90deg,#000 0 1px,transparent 1px 2px);"></div>
<div style="left:27px;top:909px;width:1871px;height:1px;background:repeating-linear-gradient(90deg,#000 0 1px,transparent 1px 2px);"></div>
<div style="left:27px;top:929px;width:1871px;height:1px;background:repeating-linear-gradient(90deg,#000 0 1px,transparent 1px 2px);"></div>
<div style="left:50.08px;top:832.05px;line-height:19px;font-size:14.3px;color:#000;white-space:pre;letter-spacing:0.150px;font-style:italic;">Perioada gestionară</div>
<div style="left:32.55px;top:851.05px;line-height:19px;font-size:14.3px;color:#000;white-space:pre;letter-spacing:0.144px;font-style:italic;">(cumulativ de la începutul</div>
<div style="left:93.59px;top:870.35px;line-height:19px;font-size:14.3px;color:#000;white-space:pre;letter-spacing:0.129px;font-style:italic;">anului)</div>
<div style="left:394.20px;top:823.26px;line-height:19px;font-size:14.3px;color:#000;white-space:pre;letter-spacing:0.220px;font-weight:bold;">Total Venituri</div>
<div style="left:1381.97px;top:814.05px;line-height:19px;font-size:14.3px;color:#000;white-space:pre;letter-spacing:0.133px;font-style:italic;">inclusiv:</div>
<div style="left:871.18px;top:833.26px;line-height:19px;font-size:14.3px;color:#000;white-space:pre;letter-spacing:0.220px;font-weight:bold;">Serviciul Fiscal</div>
<div style="left:1380.38px;top:833.26px;line-height:19px;font-size:14.3px;color:#000;white-space:pre;letter-spacing:0.220px;font-weight:bold;">Serviciul Vamal</div>
<div style="left:1876.50px;top:834.05px;line-height:19px;font-size:14.3px;color:#000;white-space:pre;letter-spacing:0.220px;font-weight:bold;">Alte venituri</div>
<div style="left:252.67px;top:861.55px;line-height:19px;font-size:14.3px;color:#000;white-space:pre;letter-spacing:0.220px;font-weight:bold;">Anul</div>
<div style="left:246.49px;top:881.55px;line-height:19px;font-size:14.3px;color:#000;white-space:pre;letter-spacing:0.220px;font-weight:bold;">curent</div>
<div style="left:382.17px;top:861.55px;line-height:19px;font-size:14.3px;color:#000;white-space:pre;letter-spacing:0.220px;font-weight:bold;">Anul</div>
<div style="left:363.34px;top:881.55px;line-height:19px;font-size:14.3px;color:#000;white-space:pre;letter-spacing:0.220px;font-weight:bold;">precedent</div>
<div style="left:718.17px;top:861.55px;line-height:19px;font-size:14.3px;color:#000;white-space:pre;letter-spacing:0.220px;font-weight:bold;">Anul</div>
<div style="left:711.99px;top:881.55px;line-height:19px;font-size:14.3px;color:#000;white-space:pre;letter-spacing:0.220px;font-weight:bold;">curent</div>
<div style="left:829.67px;top:861.55px;line-height:19px;font-size:14.3px;color:#000;white-space:pre;letter-spacing:0.220px;font-weight:bold;">Anul</div>
<div style="left:810.84px;top:881.55px;line-height:19px;font-size:14.3px;color:#000;white-space:pre;letter-spacing:0.220px;font-weight:bold;">precedent</div>
<div style="left:1221.67px;top:861.55px;line-height:19px;font-size:14.3px;color:#000;white-space:pre;letter-spacing:0.220px;font-weight:bold;">Anul</div>
<div style="left:1215.49px;top:881.55px;line-height:19px;font-size:14.3px;color:#000;white-space:pre;letter-spacing:0.220px;font-weight:bold;">curent</div>
<div style="left:1340.67px;top:861.55px;line-height:19px;font-size:14.3px;color:#000;white-space:pre;letter-spacing:0.220px;font-weight:bold;">Anul</div>
<div style="left:1321.84px;top:881.55px;line-height:19px;font-size:14.3px;color:#000;white-space:pre;letter-spacing:0.220px;font-weight:bold;">precedent</div>
<div style="left:1737.17px;top:861.55px;line-height:19px;font-size:14.3px;color:#000;white-space:pre;letter-spacing:0.220px;font-weight:bold;">Anul</div>
<div style="left:1730.99px;top:881.55px;line-height:19px;font-size:14.3px;color:#000;white-space:pre;letter-spacing:0.220px;font-weight:bold;">curent</div>
<div style="left:1860.17px;top:861.55px;line-height:19px;font-size:14.3px;color:#000;white-space:pre;letter-spacing:0.220px;font-weight:bold;">Anul</div>
<div style="left:1841.34px;top:881.55px;line-height:19px;font-size:14.3px;color:#000;white-space:pre;letter-spacing:0.220px;font-weight:bold;">precedent</div>
<div style="left:547.23px;top:853.76px;line-height:19px;font-size:14.3px;color:#000;white-space:pre;letter-spacing:0.150px;font-style:italic;">Devieri</div>
<div style="left:504.69px;top:882.76px;line-height:19px;font-size:14.3px;color:#000;white-space:pre;font-style:italic;">(+;-)</div>
<div style="left:610.00px;top:882.76px;line-height:19px;font-size:14.3px;color:#000;white-space:pre;font-style:italic;">(%-)</div>
<div style="left:1013.73px;top:853.76px;line-height:19px;font-size:14.3px;color:#000;white-space:pre;letter-spacing:0.150px;font-style:italic;">Devieri</div>
<div style="left:955.69px;top:882.76px;line-height:19px;font-size:14.3px;color:#000;white-space:pre;font-style:italic;">(+;-)</div>
<div style="left:1093.50px;top:882.76px;line-height:19px;font-size:14.3px;color:#000;white-space:pre;font-style:italic;">(%-)</div>
<div style="left:1530.73px;top:853.76px;line-height:19px;font-size:14.3px;color:#000;white-space:pre;letter-spacing:0.150px;font-style:italic;">Devieri</div>
<div style="left:1468.19px;top:882.76px;line-height:19px;font-size:14.3px;color:#000;white-space:pre;font-style:italic;">(+;-)</div>
<div style="left:1609.00px;top:882.76px;line-height:19px;font-size:14.3px;color:#000;white-space:pre;font-style:italic;">(%-)</div>
<div style="left:28.30px;top:911.16px;line-height:19px;font-size:14.3px;color:#000;white-space:pre;letter-spacing:0.220px;font-weight:bold;">decembrie</div>
<div style="left:282.29px;top:911.16px;line-height:19px;font-size:14.3px;color:#000;white-space:pre;font-weight:bold;">3.910,5</div>
<div style="left:414.29px;top:911.16px;line-height:19px;font-size:14.3px;color:#000;white-space:pre;font-weight:bold;">3.790,0</div>
<div style="left:533.21px;top:911.16px;line-height:19px;font-size:14.3px;color:#000;white-space:pre;font-weight:bold;">120,6</div>
<div style="left:637.21px;top:911.16px;line-height:19px;font-size:14.3px;color:#000;white-space:pre;font-weight:bold;">103,2</div>
<div style="left:743.29px;top:911.16px;line-height:19px;font-size:14.3px;color:#000;white-space:pre;font-weight:bold;">1.869,2</div>
<div style="left:848.29px;top:911.16px;line-height:19px;font-size:14.3px;color:#000;white-space:pre;font-weight:bold;">1.795,5</div>
<div style="left:1009.17px;top:911.16px;line-height:19px;font-size:14.3px;color:#000;white-space:pre;font-weight:bold;">73,7</div>
<div style="left:1136.21px;top:911.16px;line-height:19px;font-size:14.3px;color:#000;white-space:pre;font-weight:bold;">104,1</div>
<div style="left:1251.29px;top:911.16px;line-height:19px;font-size:14.3px;color:#000;white-space:pre;font-weight:bold;">2.160,3</div>
<div style="left:1362.29px;top:911.16px;line-height:19px;font-size:14.3px;color:#000;white-space:pre;font-weight:bold;">2.191,9</div>
<div style="left:1515.41px;top:911.16px;line-height:19px;font-size:14.3px;color:#000;white-space:pre;font-weight:bold;">-31,6</div>
<div style="left:1664.17px;top:911.16px;line-height:19px;font-size:14.3px;color:#000;white-space:pre;font-weight:bold;">98,6</div>
<div style="left:1774.21px;top:911.16px;line-height:19px;font-size:14.3px;color:#000;white-space:pre;font-weight:bold;">225,5</div>
<div style="left:28.30px;top:931.16px;line-height:19px;font-size:14.3px;color:#000;white-space:pre;letter-spacing:-0.011px;font-style:italic;">încasarile medii zilnice</div>
<div style="left:294.21px;top:931.16px;line-height:19px;font-size:14.3px;color:#000;white-space:pre;">205,8</div>
<div style="left:426.21px;top:931.16px;line-height:19px;font-size:14.3px;color:#000;white-space:pre;">199,5</div>
<div style="left:549.12px;top:931.16px;line-height:19px;font-size:14.3px;color:#000;white-space:pre;">6,3</div>
<div style="left:637.21px;top:931.16px;line-height:19px;font-size:14.3px;color:#000;white-space:pre;">103,2</div>
<div style="left:763.17px;top:931.16px;line-height:19px;font-size:14.3px;color:#000;white-space:pre;">98,4</div>
<div style="left:868.17px;top:931.16px;line-height:19px;font-size:14.3px;color:#000;white-space:pre;">94,5</div>
<div style="left:1017.12px;top:931.16px;line-height:19px;font-size:14.3px;color:#000;white-space:pre;">3,9</div>
<div style="left:1136.21px;top:931.16px;line-height:19px;font-size:14.3px;color:#000;white-space:pre;">104,1</div>
<div style="left:1264.28px;top:931.16px;line-height:19px;font-size:14.3px;color:#000;white-space:pre;">113,7</div>
<div style="left:1375.28px;top:931.16px;line-height:19px;font-size:14.3px;color:#000;white-space:pre;">115,4</div>
<div style="left:1523.36px;top:931.16px;line-height:19px;font-size:14.3px;color:#000;white-space:pre;">-1,7</div>
<div style="left:1664.17px;top:931.16px;line-height:19px;font-size:14.3px;color:#000;white-space:pre;">98,6</div>
<div style="left:1783.23px;top:931.16px;line-height:19px;font-size:14.3px;color:#000;white-space:pre;">11,9</div>
<svg style="left:206px;top:910px;" width="6" height="6" viewBox="0 0 6 6"><path d="M0 0h6Q2 2 0 5.500z" fill="#1e7b34"/></svg>
<svg style="left:333px;top:910px;" width="6" height="6" viewBox="0 0 6 6"><path d="M0 0h6Q2 2 0 5.500z" fill="#1e7b34"/></svg>
<svg style="left:465px;top:910px;" width="6" height="6" viewBox="0 0 6 6"><path d="M0 0h6Q2 2 0 5.500z" fill="#1e7b34"/></svg>
<svg style="left:572px;top:910px;" width="6" height="6" viewBox="0 0 6 6"><path d="M0 0h6Q2 2 0 5.500z" fill="#1e7b34"/></svg>
<svg style="left:676px;top:910px;" width="6" height="6" viewBox="0 0 6 6"><path d="M0 0h6Q2 2 0 5.500z" fill="#1e7b34"/></svg>
<svg style="left:794px;top:910px;" width="6" height="6" viewBox="0 0 6 6"><path d="M0 0h6Q2 2 0 5.500z" fill="#1e7b34"/></svg>
<svg style="left:899px;top:910px;" width="6" height="6" viewBox="0 0 6 6"><path d="M0 0h6Q2 2 0 5.500z" fill="#1e7b34"/></svg>
<svg style="left:1040px;top:910px;" width="6" height="6" viewBox="0 0 6 6"><path d="M0 0h6Q2 2 0 5.500z" fill="#1e7b34"/></svg>
<svg style="left:1175px;top:910px;" width="6" height="6" viewBox="0 0 6 6"><path d="M0 0h6Q2 2 0 5.500z" fill="#1e7b34"/></svg>
<svg style="left:1302px;top:910px;" width="6" height="6" viewBox="0 0 6 6"><path d="M0 0h6Q2 2 0 5.500z" fill="#1e7b34"/></svg>
<svg style="left:1551px;top:910px;" width="6" height="6" viewBox="0 0 6 6"><path d="M0 0h6Q2 2 0 5.500z" fill="#1e7b34"/></svg>
<svg style="left:465px;top:930px;" width="6" height="6" viewBox="0 0 6 6"><path d="M0 0h6Q2 2 0 5.500z" fill="#1e7b34"/></svg>
<svg style="left:572px;top:930px;" width="6" height="6" viewBox="0 0 6 6"><path d="M0 0h6Q2 2 0 5.500z" fill="#1e7b34"/></svg>
<svg style="left:899px;top:930px;" width="6" height="6" viewBox="0 0 6 6"><path d="M0 0h6Q2 2 0 5.500z" fill="#1e7b34"/></svg>
<svg style="left:1040px;top:930px;" width="6" height="6" viewBox="0 0 6 6"><path d="M0 0h6Q2 2 0 5.500z" fill="#1e7b34"/></svg>
<svg style="left:1551px;top:930px;" width="6" height="6" viewBox="0 0 6 6"><path d="M0 0h6Q2 2 0 5.500z" fill="#1e7b34"/></svg>
<svg style="left:0;top:0;" width="1920" height="1002" viewBox="0 0 1920 1002"><path fill="none" stroke="#dc1f27" stroke-width="5" stroke-linecap="round" stroke-linejoin="round" d="M1049.0 637.8C1049.1 635.6 1049.6 629.4 1049.5 624.8C1049.4 620.1 1048.9 614.9 1048.5 609.9C1048.1 604.9 1047.3 599.1 1047.0 594.9C1046.7 590.7 1046.0 588.4 1046.5 584.9C1047.0 581.4 1048.2 576.9 1050.0 573.9C1051.8 570.9 1053.7 569.1 1057.0 567.0C1060.3 564.9 1064.5 562.6 1070.0 561.0C1075.5 559.4 1083.3 557.8 1089.9 557.5C1096.5 557.2 1103.2 558.4 1109.8 559.0C1116.4 559.6 1123.1 560.7 1129.8 561.0C1136.5 561.3 1143.1 561.2 1149.8 561.0C1156.5 560.8 1163.9 560.7 1169.7 560.0C1175.5 559.3 1179.7 557.8 1184.7 557.0C1189.8 556.2 1195.8 555.8 1200.0 555.5C1204.2 555.2 1204.2 555.8 1210.0 555.5C1215.8 555.2 1226.6 554.2 1234.9 554.0C1243.2 553.8 1252.4 553.8 1259.9 554.0C1267.4 554.2 1274.8 554.0 1279.8 555.0C1284.8 556.0 1285.6 558.1 1289.8 560.0C1294.0 561.9 1301.0 564.0 1304.8 566.5C1308.6 569.0 1309.8 571.1 1312.8 575.0C1315.8 578.9 1319.5 584.6 1322.7 589.9C1325.9 595.2 1328.9 601.1 1331.7 606.9C1334.5 612.7 1337.7 618.9 1339.7 624.8C1341.7 630.6 1342.4 637.0 1343.7 642.0C1345.0 647.0 1346.9 650.3 1347.7 655.0C1348.5 659.7 1348.4 665.0 1348.7 670.0C1349.0 675.0 1349.5 680.4 1349.7 684.9C1349.9 689.4 1350.2 693.1 1349.7 696.9C1349.2 700.7 1348.4 704.8 1346.7 707.9C1345.0 711.0 1342.9 713.6 1339.7 715.8C1336.5 717.9 1332.7 719.5 1327.7 720.8C1322.7 722.1 1316.1 723.0 1309.8 723.8C1303.5 724.6 1296.5 725.1 1289.8 725.8C1283.1 726.5 1276.4 727.4 1269.8 727.8C1263.2 728.2 1256.6 728.0 1249.9 728.3C1243.2 728.6 1236.6 729.2 1229.9 729.8C1223.2 730.4 1215.8 731.2 1210.0 731.8C1204.2 732.4 1199.2 733.0 1195.0 733.3C1190.8 733.6 1188.1 733.8 1184.7 733.8C1181.3 733.8 1178.4 734.0 1174.7 733.3C1171.0 732.6 1166.9 731.0 1162.7 729.8C1158.5 728.6 1153.6 727.1 1149.8 726.3C1146.0 725.5 1143.1 725.0 1139.8 724.8C1136.5 724.6 1133.5 725.2 1129.8 725.3C1126.1 725.4 1121.3 726.0 1117.8 725.3C1114.3 724.5 1111.4 722.9 1108.8 720.8C1106.2 718.7 1104.1 716.4 1101.9 712.9C1099.8 709.4 1098.1 704.6 1095.9 699.9C1093.7 695.2 1091.4 689.9 1088.9 684.9C1086.4 679.9 1083.7 675.0 1080.9 670.0C1078.1 665.0 1074.9 660.0 1071.9 655.0C1068.9 650.0 1065.1 644.2 1062.9 640.0C1060.7 635.8 1060.7 633.6 1058.9 629.8C1057.1 625.9 1054.2 620.7 1052.0 616.9C1049.8 613.1 1047.7 609.2 1046.0 606.9C1044.3 604.6 1043.4 603.7 1042.0 602.9C1040.6 602.1 1038.2 602.1 1037.5 602.0"/></svg>
<div style="left:1549px;top:745px;width:147px;height:46px;border:2px solid #217346;"></div>
<div style="left:1692px;top:786px;width:6px;height:6px;background:#217346;border:1px solid #fff;border-right:none;border-bottom:none;"></div>
<div style="left:26px;top:177px;width:1px;height:771px;background:#1f1f78;"></div>
<div style="left:1898px;top:177px;width:1px;height:771px;background:#b4b4b4;"></div>
<div style="left:0px;top:160px;width:1898px;height:17px;background:#e6e6e6;"></div>
<div style="left:0px;top:177px;width:26px;height:771px;background:#e6e6e6;"></div>
<svg style="left:13.5px;top:165.5px;" width="9" height="9" viewBox="0 0 9 9"><path d="M8.500 .5v8h-8z" fill="#b5b5b5"/></svg>
<div style="left:204.5px;top:162px;width:1px;height:15px;background:#c0c0c0;"></div>
<div style="left:110.99px;top:160.39px;line-height:17px;font-size:13.3px;color:#333;white-space:pre;letter-spacing:0.150px;">A</div>
<div style="left:331.5px;top:162px;width:1px;height:15px;background:#c0c0c0;"></div>
<div style="left:263.99px;top:160.39px;line-height:17px;font-size:13.3px;color:#333;white-space:pre;letter-spacing:0.150px;">B</div>
<div style="left:463.5px;top:162px;width:1px;height:15px;background:#c0c0c0;"></div>
<div style="left:393.12px;top:160.39px;line-height:17px;font-size:13.3px;color:#333;white-space:pre;letter-spacing:0.150px;">C</div>
<div style="left:570.5px;top:162px;width:1px;height:15px;background:#c0c0c0;"></div>
<div style="left:512.62px;top:160.39px;line-height:17px;font-size:13.3px;color:#333;white-space:pre;letter-spacing:0.150px;">D</div>
<div style="left:674.5px;top:162px;width:1px;height:15px;background:#c0c0c0;"></div>
<div style="left:618.49px;top:160.39px;line-height:17px;font-size:13.3px;color:#333;white-space:pre;letter-spacing:0.150px;">E</div>
<div style="left:792.5px;top:162px;width:1px;height:15px;background:#c0c0c0;"></div>
<div style="left:729.86px;top:160.39px;line-height:17px;font-size:13.3px;color:#333;white-space:pre;letter-spacing:0.150px;">F</div>
<div style="left:897.5px;top:162px;width:1px;height:15px;background:#c0c0c0;"></div>
<div style="left:840.25px;top:160.39px;line-height:17px;font-size:13.3px;color:#333;white-space:pre;letter-spacing:0.150px;">G</div>
<div style="left:1038.5px;top:162px;width:1px;height:15px;background:#c0c0c0;"></div>
<div style="left:963.62px;top:160.39px;line-height:17px;font-size:13.3px;color:#333;white-space:pre;letter-spacing:0.150px;">H</div>
<div style="left:1173.5px;top:162px;width:1px;height:15px;background:#c0c0c0;"></div>
<div style="left:1104.58px;top:160.39px;line-height:17px;font-size:13.3px;color:#333;white-space:pre;letter-spacing:0.150px;">I</div>
<div style="left:1300.5px;top:162px;width:1px;height:15px;background:#c0c0c0;"></div>
<div style="left:1234.10px;top:160.39px;line-height:17px;font-size:13.3px;color:#333;white-space:pre;letter-spacing:0.150px;">J</div>
<div style="left:1411.5px;top:162px;width:1px;height:15px;background:#c0c0c0;"></div>
<div style="left:1351.99px;top:160.39px;line-height:17px;font-size:13.3px;color:#333;white-space:pre;letter-spacing:0.150px;">K</div>
<div style="left:1549.5px;top:162px;width:1px;height:15px;background:#c0c0c0;"></div>
<div style="left:1475.39px;top:160.39px;line-height:17px;font-size:13.3px;color:#333;white-space:pre;letter-spacing:0.150px;">M</div>
<div style="left:1550px;top:160px;width:144px;height:17px;background:#d2d2d2;border-bottom:2px solid #217346;"></div>
<div style="left:1693.5px;top:162px;width:1px;height:15px;background:#c0c0c0;"></div>
<div style="left:1617.12px;top:160.39px;line-height:17px;font-size:13.3px;color:#217346;white-space:pre;letter-spacing:0.150px;">N</div>
<div style="left:1811.5px;top:162px;width:1px;height:15px;background:#c0c0c0;"></div>
<div style="left:1747.75px;top:160.39px;line-height:17px;font-size:13.3px;color:#333;white-space:pre;letter-spacing:0.150px;">O</div>
<div style="left:1898px;top:162px;width:1px;height:15px;background:#c0c0c0;"></div>
<div style="left:1869.49px;top:160.39px;line-height:17px;font-size:13.3px;color:#333;white-space:pre;letter-spacing:0.150px;">P</div>
<div style="left:25px;top:162px;width:1px;height:15px;background:#c0c0c0;"></div>
<div style="left:1413.5px;top:162px;width:1px;height:15px;background:#c0c0c0;"></div>
<div style="left:0px;top:177px;width:1898px;height:1px;background:#ababab;"></div>
<div style="left:0px;top:197px;width:25px;height:1px;background:#c0c0c0;"></div>
<div style="left:5.60px;top:180.46px;line-height:17px;font-size:13.1px;color:#333;white-space:pre;letter-spacing:-0.586px;">34</div>
<div style="left:0px;top:217px;width:25px;height:1px;background:#c0c0c0;"></div>
<div style="left:5.60px;top:200.46px;line-height:17px;font-size:13.1px;color:#333;white-space:pre;letter-spacing:-0.586px;">35</div>
<div style="left:0px;top:237px;width:25px;height:1px;background:#c0c0c0;"></div>
<div style="left:5.60px;top:220.46px;line-height:17px;font-size:13.1px;color:#333;white-space:pre;letter-spacing:-0.586px;">36</div>
<div style="left:0px;top:257px;width:25px;height:1px;background:#c0c0c0;"></div>
<div style="left:5.60px;top:240.46px;line-height:17px;font-size:13.1px;color:#333;white-space:pre;letter-spacing:-0.586px;">37</div>
<div style="left:0px;top:277px;width:25px;height:1px;background:#c0c0c0;"></div>
<div style="left:5.60px;top:260.46px;line-height:17px;font-size:13.1px;color:#333;white-space:pre;letter-spacing:-0.586px;">38</div>
<div style="left:0px;top:297px;width:25px;height:1px;background:#c0c0c0;"></div>
<div style="left:5.60px;top:280.46px;line-height:17px;font-size:13.1px;color:#333;white-space:pre;letter-spacing:-0.586px;">39</div>
<div style="left:0px;top:317px;width:25px;height:1px;background:#c0c0c0;"></div>
<div style="left:5.60px;top:300.46px;line-height:17px;font-size:13.1px;color:#333;white-space:pre;letter-spacing:-0.586px;">40</div>
<div style="left:0px;top:337px;width:25px;height:1px;background:#c0c0c0;"></div>
<div style="left:5.60px;top:320.46px;line-height:17px;font-size:13.1px;color:#333;white-space:pre;letter-spacing:-0.586px;">41</div>
<div style="left:0px;top:358px;width:25px;height:1px;background:#c0c0c0;"></div>
<div style="left:5.60px;top:341.46px;line-height:17px;font-size:13.1px;color:#333;white-space:pre;letter-spacing:-0.586px;">42</div>
<div style="left:0px;top:379px;width:25px;height:1px;background:#c0c0c0;"></div>
<div style="left:5.60px;top:362.46px;line-height:17px;font-size:13.1px;color:#333;white-space:pre;letter-spacing:-0.586px;">43</div>
<div style="left:0px;top:402px;width:25px;height:1px;background:#c0c0c0;"></div>
<div style="left:5.60px;top:385.46px;line-height:17px;font-size:13.1px;color:#333;white-space:pre;letter-spacing:-0.586px;">44</div>
<div style="left:0px;top:433px;width:25px;height:1px;background:#c0c0c0;"></div>
<div style="left:5.60px;top:416.46px;line-height:17px;font-size:13.1px;color:#333;white-space:pre;letter-spacing:-0.586px;">45</div>
<div style="left:0px;top:466px;width:25px;height:1px;background:#c0c0c0;"></div>
<div style="left:5.60px;top:449.46px;line-height:17px;font-size:13.1px;color:#333;white-space:pre;letter-spacing:-0.586px;">46</div>
<div style="left:0px;top:489px;width:25px;height:1px;background:#c0c0c0;"></div>
<div style="left:5.60px;top:472.46px;line-height:17px;font-size:13.1px;color:#333;white-space:pre;letter-spacing:-0.586px;">47</div>
<div style="left:0px;top:532px;width:25px;height:1px;background:#c0c0c0;"></div>
<div style="left:5.60px;top:515.46px;line-height:17px;font-size:13.1px;color:#333;white-space:pre;letter-spacing:-0.586px;">48</div>
<div style="left:0px;top:551px;width:25px;height:1px;background:#c0c0c0;"></div>
<div style="left:5.60px;top:534.46px;line-height:17px;font-size:13.1px;color:#333;white-space:pre;letter-spacing:-0.586px;">49</div>
<div style="left:0px;top:574px;width:25px;height:1px;background:#c0c0c0;"></div>
<div style="left:5.60px;top:557.46px;line-height:17px;font-size:13.1px;color:#333;white-space:pre;letter-spacing:-0.586px;">50</div>
<div style="left:0px;top:604px;width:25px;height:1px;background:#c0c0c0;"></div>
<div style="left:5.60px;top:587.46px;line-height:17px;font-size:13.1px;color:#333;white-space:pre;letter-spacing:-0.586px;">51</div>
<div style="left:0px;top:627px;width:25px;height:1px;background:#c0c0c0;"></div>
<div style="left:5.60px;top:610.46px;line-height:17px;font-size:13.1px;color:#333;white-space:pre;letter-spacing:-0.586px;">52</div>
<div style="left:0px;top:670px;width:25px;height:1px;background:#c0c0c0;"></div>
<div style="left:5.60px;top:653.46px;line-height:17px;font-size:13.1px;color:#333;white-space:pre;letter-spacing:-0.586px;">53</div>
<div style="left:0px;top:707px;width:25px;height:1px;background:#c0c0c0;"></div>
<div style="left:5.60px;top:690.46px;line-height:17px;font-size:13.1px;color:#333;white-space:pre;letter-spacing:-0.586px;">54</div>
<div style="left:0px;top:726px;width:25px;height:1px;background:#c0c0c0;"></div>
<div style="left:5.60px;top:709.46px;line-height:17px;font-size:13.1px;color:#333;white-space:pre;letter-spacing:-0.586px;">55</div>
<div style="left:0px;top:746px;width:25px;height:1px;background:#c0c0c0;"></div>
<div style="left:5.60px;top:729.46px;line-height:17px;font-size:13.1px;color:#333;white-space:pre;letter-spacing:-0.586px;">56</div>
<div style="left:0px;top:746px;width:25px;height:43px;background:#d2d2d2;border-right:2px solid #217346;"></div>
<div style="left:0px;top:789px;width:25px;height:1px;background:#c0c0c0;"></div>
<div style="left:5.60px;top:772.46px;line-height:17px;font-size:13.1px;color:#217346;white-space:pre;letter-spacing:-0.586px;">57</div>
<div style="left:0px;top:812px;width:25px;height:1px;background:#c0c0c0;"></div>
<div style="left:5.60px;top:795.46px;line-height:17px;font-size:13.1px;color:#333;white-space:pre;letter-spacing:-0.586px;">58</div>
<div style="left:0px;top:832px;width:25px;height:1px;background:#c0c0c0;"></div>
<div style="left:5.60px;top:815.46px;line-height:17px;font-size:13.1px;color:#333;white-space:pre;letter-spacing:-0.586px;">59</div>
<div style="left:0px;top:852px;width:25px;height:1px;background:#c0c0c0;"></div>
<div style="left:5.60px;top:835.46px;line-height:17px;font-size:13.1px;color:#333;white-space:pre;letter-spacing:-0.586px;">60</div>
<div style="left:0px;top:873px;width:25px;height:1px;background:#c0c0c0;"></div>
<div style="left:5.60px;top:856.46px;line-height:17px;font-size:13.1px;color:#333;white-space:pre;letter-spacing:-0.586px;">61</div>
<div style="left:0px;top:895px;width:25px;height:1px;background:#c0c0c0;"></div>
<div style="left:5.60px;top:878.46px;line-height:17px;font-size:13.1px;color:#333;white-space:pre;letter-spacing:-0.586px;">62</div>
<div style="left:0px;top:909px;width:25px;height:1px;background:#c0c0c0;"></div>
<div style="left:5.60px;top:894.76px;line-height:17px;font-size:13.1px;color:#333;white-space:pre;letter-spacing:-0.586px;">63</div>
<div style="left:0px;top:929px;width:25px;height:1px;background:#c0c0c0;"></div>
<div style="left:5.60px;top:912.46px;line-height:17px;font-size:13.1px;color:#333;white-space:pre;letter-spacing:-0.586px;">64</div>
<div style="left:0px;top:948px;width:25px;height:1px;background:#c0c0c0;"></div>
<div style="left:5.60px;top:931.46px;line-height:17px;font-size:13.1px;color:#333;white-space:pre;letter-spacing:-0.586px;">65</div>
<div style="left:1898px;top:160px;width:22px;height:788px;background:#e6e6e6;"></div>
<div style="left:1902.5px;top:163.5px;width:14px;height:13.5px;background:#fff;border:1px solid #d0d0d0;"></div>
<svg style="left:1906px;top:168px;" width="7" height="4" viewBox="0 0 7 4"><path d="M0 4l3.500-4 3.500 4z" fill="#777"/></svg>
<div style="left:1903px;top:934px;width:14px;height:14px;background:#fff;border:1px solid #d0d0d0;"></div>
<svg style="left:1906.5px;top:939.5px;" width="7" height="4" viewBox="0 0 7 4"><path d="M0 0h7l-3.500 4z" fill="#777"/></svg>
<div style="left:1903px;top:521px;width:14px;height:298px;background:#fff;border:1px solid #d0d0d0;"></div>
<div style="left:1903px;top:180px;width:14px;height:341px;background:#dadada;"></div>
<div style="left:0px;top:948px;width:1920px;height:28px;background:#e6e6e6;"></div>
<div style="left:0px;top:948px;width:1898px;height:1px;background:#a8a8a8;"></div>
<svg style="left:26px;top:957px;" width="7" height="9" viewBox="0 0 7 9"><path d="M6 .5v8L1 4.500z" fill="#c3c3c3"/></svg>
<svg style="left:55px;top:957px;" width="7" height="9" viewBox="0 0 7 9"><path d="M1 .5v8l5-4z" fill="#c3c3c3"/></svg>
<div style="left:100px;top:951px;width:1px;height:21px;background:#bdbdbd;"></div>
<div style="left:103.3px;top:951px;width:69.00000000000001px;height:21.5px;background:#92d050;"></div>
<div style="left:174.3px;top:951px;width:1px;height:21px;background:#c9c9c9;"></div>
<div style="left:113.50px;top:953.70px;line-height:16px;font-size:12.4px;color:#1e1e1e;white-space:pre;letter-spacing:0.186px;">Ianuarie</div>
<div style="left:176.7px;top:951px;width:77.30000000000001px;height:21.5px;background:#92d050;"></div>
<div style="left:256px;top:951px;width:1px;height:21px;background:#c9c9c9;"></div>
<div style="left:186.80px;top:953.70px;line-height:16px;font-size:12.4px;color:#1e1e1e;white-space:pre;letter-spacing:0.259px;">Februarie</div>
<div style="left:259.3px;top:951px;width:58.0px;height:21.5px;background:#92d050;"></div>
<div style="left:319.3px;top:951px;width:1px;height:21px;background:#c9c9c9;"></div>
<div style="left:268.80px;top:953.70px;line-height:16px;font-size:12.4px;color:#1e1e1e;white-space:pre;letter-spacing:0.658px;">Martie</div>
<div style="left:322.7px;top:951px;width:60.0px;height:21.5px;background:#92d050;"></div>
<div style="left:384.7px;top:951px;width:1px;height:21px;background:#c9c9c9;"></div>
<div style="left:333.80px;top:953.70px;line-height:16px;font-size:12.4px;color:#1e1e1e;white-space:pre;letter-spacing:0.420px;">Aprilie</div>
<div style="left:387.7px;top:951px;width:42.30000000000001px;height:21.5px;background:#92d050;"></div>
<div style="left:432px;top:951px;width:1px;height:21px;background:#c9c9c9;"></div>
<div style="left:396.80px;top:953.70px;line-height:16px;font-size:12.4px;color:#1e1e1e;white-space:pre;letter-spacing:0.906px;">Mai</div>
<div style="left:435px;top:951px;width:48.30000000000001px;height:21.5px;background:#92d050;"></div>
<div style="left:485.3px;top:951px;width:1px;height:21px;background:#c9c9c9;"></div>
<div style="left:445.50px;top:953.70px;line-height:16px;font-size:12.4px;color:#1e1e1e;white-space:pre;letter-spacing:0.162px;">Iunie</div>
<div style="left:489px;top:951px;width:47px;height:21.5px;background:#92d050;"></div>
<div style="left:538px;top:951px;width:1px;height:21px;background:#c9c9c9;"></div>
<div style="left:500.50px;top:953.70px;line-height:16px;font-size:12.4px;color:#1e1e1e;white-space:pre;letter-spacing:0.110px;">Iulie</div>
<div style="left:540.7px;top:951px;width:63.299999999999955px;height:21.5px;background:#92d050;"></div>
<div style="left:606px;top:951px;width:1px;height:21px;background:#c9c9c9;"></div>
<div style="left:551.80px;top:953.70px;line-height:16px;font-size:12.4px;color:#1e1e1e;white-space:pre;letter-spacing:0.299px;">August</div>
<div style="left:609px;top:951px;width:88.29999999999995px;height:21.5px;background:#92d050;"></div>
<div style="left:699.3px;top:951px;width:1px;height:21px;background:#c9c9c9;"></div>
<div style="left:618.50px;top:953.70px;line-height:16px;font-size:12.4px;color:#1e1e1e;white-space:pre;letter-spacing:0.429px;">Septembrie</div>
<div style="left:703.3px;top:951px;width:83.40000000000009px;height:21.5px;background:#92d050;"></div>
<div style="left:788.7px;top:951px;width:1px;height:21px;background:#c9c9c9;"></div>
<div style="left:712.80px;top:953.70px;line-height:16px;font-size:12.4px;color:#1e1e1e;white-space:pre;letter-spacing:0.534px;">Octombrie</div>
<div style="left:792.3px;top:951px;width:84.40000000000009px;height:21.5px;background:#92d050;"></div>
<div style="left:878.7px;top:951px;width:1px;height:21px;background:#c9c9c9;"></div>
<div style="left:801.80px;top:953.70px;line-height:16px;font-size:12.4px;color:#1e1e1e;white-space:pre;letter-spacing:0.610px;">Noiembrie</div>
<div style="left:878px;top:949px;width:90px;height:23.5px;background:linear-gradient(#ffffff 0%,#fbfdf8 55%,#dff0cb 100%);border-bottom:2px solid #217346;"></div>
<div style="left:890.70px;top:953.70px;line-height:16px;font-size:12.4px;color:#217346;white-space:pre;letter-spacing:0.232px;font-weight:bold;">Decembrie</div>
<svg style="left:1001px;top:953.5px;" width="17" height="17" viewBox="0 0 17 17"><circle cx="8.500" cy="8.500" r="7.300" fill="none" stroke="#777" stroke-width="1"/><path d="M8.500 4.500v8M4.500 8.500h8" stroke="#777" stroke-width="1.300"/></svg>
<div style="left:1152px;top:956px;width:2px;height:2px;background:#b0b0b0;"></div>
<div style="left:1152px;top:961px;width:2px;height:2px;background:#b0b0b0;"></div>
<div style="left:1152px;top:966px;width:2px;height:2px;background:#b0b0b0;"></div>
<div style="left:1170px;top:955px;width:14px;height:14px;background:#fff;border:1px solid #d0d0d0;"></div>
<svg style="left:1174.5px;top:958.5px;" width="4" height="7" viewBox="0 0 4 7"><path d="M4 0v7L0 3.500z" fill="#666"/></svg>
<div style="left:1184px;top:955px;width:161px;height:14px;background:#fff;border:1px solid #d0d0d0;"></div>
<div style="left:1345px;top:955px;width:539px;height:14px;background:#dadada;"></div>
<div style="left:1884px;top:955px;width:14px;height:14px;background:#fff;border:1px solid #d0d0d0;"></div>
<svg style="left:1889.5px;top:958.5px;" width="4" height="7" viewBox="0 0 4 7"><path d="M0 0v7l4-3.500z" fill="#666"/></svg>
<div style="left:0px;top:976px;width:1920px;height:21.5px;background:#f3f3f3;"></div>
<div style="left:0px;top:975.5px;width:1920px;height:1px;background:#d0d0d0;"></div>
<svg style="left:1630px;top:980px;" width="13" height="13" viewBox="0 0 13 13"><path d="M.5 .5h12v12h-12zM.5 4.500h12M.5 8.500h12M4.500 .5v12M8.500 .5v12" fill="none" stroke="#666" stroke-width="1"/></svg>
<svg style="left:1670px;top:980px;" width="14" height="13" viewBox="0 0 14 13"><path d="M.5 .5h13v12h-13z" fill="none" stroke="#666" stroke-width="1"/><path d="M3.500 3.500h7v6h-7z" fill="none" stroke="#666" stroke-width="1"/><path d="M5 5.500h4M5 7.500h4" fill="none" stroke="#777" stroke-width="1"/></svg>
<div style="left:1697px;top:976px;width:40px;height:21px;background:#d0d0d0;"></div>
<svg style="left:1710px;top:980px;" width="14" height="13" viewBox="0 0 14 13"><path d="M.5 .5h13v12h-13z" fill="none" stroke="#555" stroke-width="1"/><path d="M4.500 .5v7h6v-7" fill="none" stroke="#555" stroke-width="1.200"/></svg>
<div style="left:1742.5px;top:986.5px;width:8px;height:1px;background:#555;"></div>
<div style="left:1757px;top:986.5px;width:99px;height:1px;background:#9a9a9a;"></div>
<div style="left:1804px;top:981px;width:4px;height:12px;background:#555;"></div>
<div style="left:1860px;top:986.5px;width:8px;height:1px;background:#555;"></div>
<div style="left:1863.5px;top:983px;width:1px;height:8px;background:#555;"></div>
<div style="left:1882.70px;top:979.52px;line-height:15px;font-size:11.5px;color:#333;white-space:pre;letter-spacing:-0.722px;">100 %</div>
<div style="left:0px;top:997px;width:1920px;height:1px;background:#7d858e;"></div>
<div style="left:0px;top:998px;width:1920px;height:4px;background:#1b2838;"></div>
<div style="left:48px;top:997px;width:344px;height:1px;background:#bdbdbd;"></div>
<div style="left:48px;top:998px;width:344px;height:4px;background:#f0f0f0;"></div>
<div style="left:790px;top:998px;width:42px;height:4px;background:#36424f;"></div>
</div></body></html>
